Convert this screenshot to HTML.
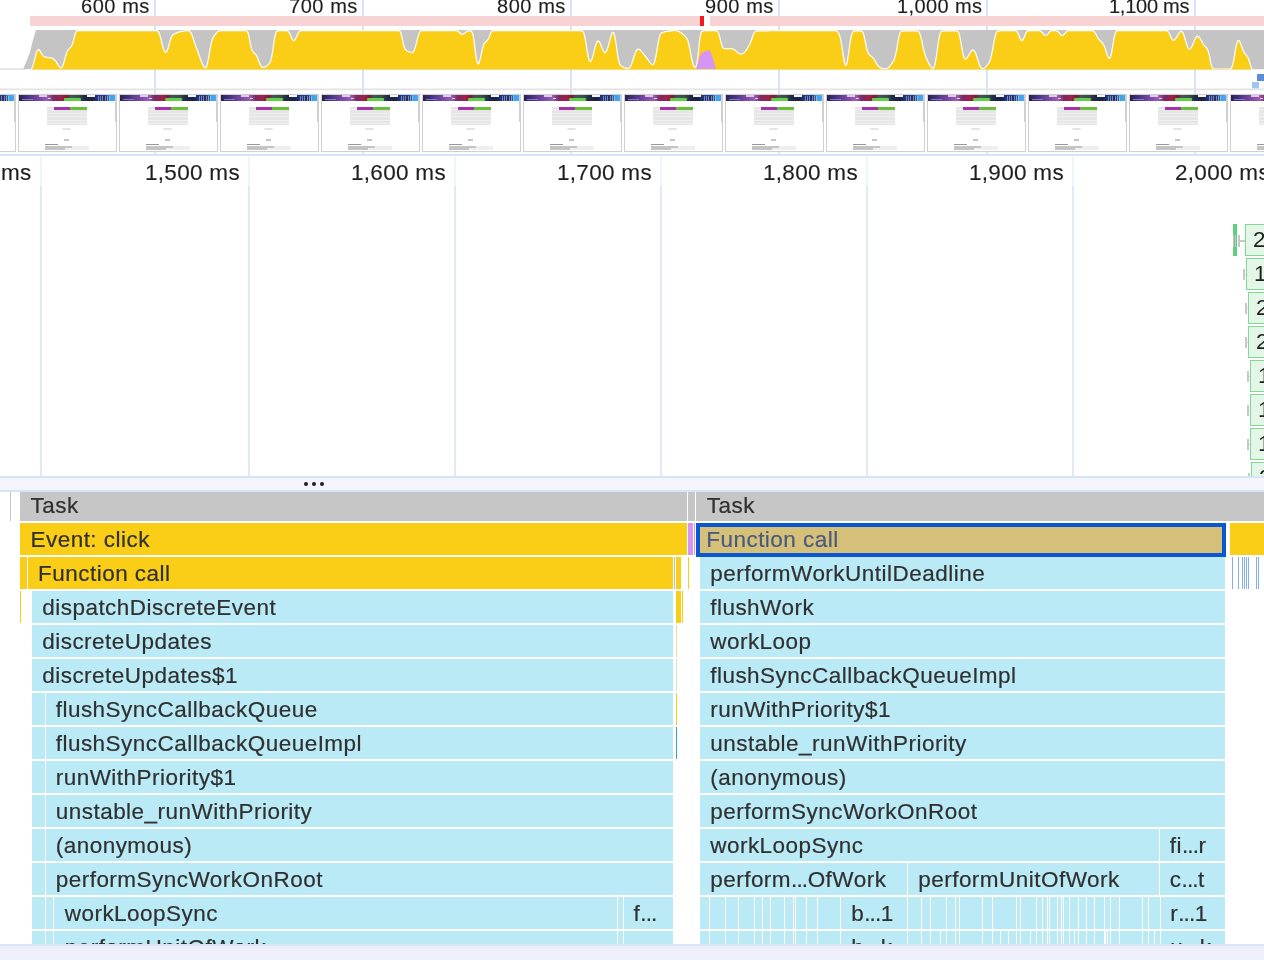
<!DOCTYPE html><html><head><meta charset="utf-8"><style>
html,body{margin:0;padding:0;width:1264px;height:960px;overflow:hidden;background:#fff;}
body{position:relative;-webkit-font-smoothing:antialiased;font-family:"Liberation Sans",sans-serif;}
div{position:absolute;box-sizing:border-box;}
.rl{will-change:transform;-webkit-text-stroke-width:0.15px;font-size:22.5px;color:#1f1f1f;white-space:nowrap;text-align:right;}
.fr{will-change:transform;-webkit-text-stroke-width:0.2px;overflow:hidden;white-space:nowrap;font-size:22.5px;color:#303030;letter-spacing:0.48px;line-height:33px;}
.fr span{position:absolute;top:0;}
</style></head><body>

<div style="left:154px;top:0px;width:2px;height:155px;background:#d6e4fb;"></div>
<div style="left:362px;top:0px;width:2px;height:155px;background:#d6e4fb;"></div>
<div style="left:570px;top:0px;width:2px;height:155px;background:#d6e4fb;"></div>
<div style="left:778px;top:0px;width:2px;height:155px;background:#d6e4fb;"></div>
<div style="left:986px;top:0px;width:2px;height:155px;background:#d6e4fb;"></div>
<div style="left:1194px;top:0px;width:2px;height:155px;background:#d6e4fb;"></div>
<div class="rl" style="right:1113.8px;top:-6px;line-height:24px;font-size:20px;letter-spacing:0.55px">600 ms</div>
<div class="rl" style="right:905.8px;top:-6px;line-height:24px;font-size:20px;letter-spacing:0.55px">700 ms</div>
<div class="rl" style="right:697.8px;top:-6px;line-height:24px;font-size:20px;letter-spacing:0.55px">800 ms</div>
<div class="rl" style="right:489.79999999999995px;top:-6px;line-height:24px;font-size:20px;letter-spacing:0.55px">900 ms</div>
<div class="rl" style="right:281.94999999999993px;top:-6px;line-height:24px;font-size:20px;letter-spacing:0.4px">1,000 ms</div>
<div class="rl" style="right:74.59999999999995px;top:-6px;line-height:24px;font-size:20px;letter-spacing:-0.25px">1,100 ms</div>
<div style="left:30px;top:16px;width:670px;height:10px;background:#f8d3d3;"></div>
<div style="left:700px;top:16px;width:4px;height:10px;background:#f41a1a;"></div>
<div style="left:710px;top:16px;width:554px;height:10px;background:#f8d3d3;"></div>
<svg style="position:absolute;left:0;top:0" width="1264" height="92" viewBox="0 0 1264 92">
<defs><clipPath id="cc"><rect x="0" y="0" width="1264" height="69.6"/></clipPath></defs><line x1="0" y1="69" x2="26" y2="69" stroke="#d0d0d0" stroke-width="1"/><g clip-path="url(#cc)">
<path d="M23,69.6 L27,60 L30,52 L33,40 L36,30 L1264,30 L1264,69.6 Z" fill="#c4c4c4"/>
<path d="M24.0,70.00 L24.5,70.00 L25.0,70.00 L25.5,70.00 L26.0,70.00 L26.5,70.00 L27.0,70.00 L27.5,70.00 L28.0,70.00 L28.5,70.00 L29.0,69.99 L29.5,69.96 L30.0,69.89 L30.5,69.72 L31.0,69.39 L31.5,68.83 L32.0,67.97 L32.5,66.81 L33.0,65.35 L33.5,63.64 L34.0,61.75 L34.5,59.75 L35.0,57.74 L35.5,55.80 L36.0,54.01 L36.5,52.45 L37.0,51.19 L37.5,50.29 L38.0,49.76 L38.5,49.59 L39.0,49.76 L39.5,50.21 L40.0,50.86 L40.5,51.65 L41.0,52.52 L41.5,53.40 L42.0,54.24 L42.5,54.99 L43.0,55.62 L43.5,56.11 L44.0,56.48 L44.5,56.74 L45.0,56.94 L45.5,57.08 L46.0,57.20 L46.5,57.29 L47.0,57.38 L47.5,57.45 L48.0,57.52 L48.5,57.59 L49.0,57.65 L49.5,57.72 L50.0,57.79 L50.5,57.88 L51.0,57.97 L51.5,58.08 L52.0,58.21 L52.5,58.38 L53.0,58.60 L53.5,58.89 L54.0,59.26 L54.5,59.74 L55.0,60.31 L55.5,60.97 L56.0,61.69 L56.5,62.47 L57.0,63.27 L57.5,64.08 L58.0,64.87 L58.5,65.62 L59.0,66.31 L59.5,66.91 L60.0,67.39 L60.5,67.71 L61.0,67.83 L61.5,67.68 L62.0,67.22 L62.5,66.42 L63.0,65.29 L63.5,63.85 L64.0,62.18 L64.5,60.36 L65.0,58.48 L65.5,56.63 L66.0,54.89 L66.5,53.33 L67.0,52.01 L67.5,50.92 L68.0,50.06 L68.5,49.37 L69.0,48.81 L69.5,48.33 L70.0,47.87 L70.5,47.38 L71.0,46.80 L71.5,46.07 L72.0,45.09 L72.5,43.82 L73.0,42.23 L73.5,40.36 L74.0,38.34 L74.5,36.34 L75.0,34.52 L75.5,33.05 L76.0,31.97 L76.5,31.28 L77.0,30.89 L77.5,30.71 L78.0,30.63 L78.5,30.61 L79.0,30.60 L79.5,30.60 L80.0,30.60 L80.5,30.60 L81.0,30.60 L81.5,30.60 L82.0,30.60 L82.5,30.60 L83.0,30.60 L83.5,30.60 L84.0,30.60 L84.5,30.60 L85.0,30.60 L85.5,30.60 L86.0,30.60 L86.5,30.60 L87.0,30.60 L87.5,30.60 L88.0,30.60 L88.5,30.60 L89.0,30.60 L89.5,30.60 L90.0,30.60 L90.5,30.60 L91.0,30.60 L91.5,30.60 L92.0,30.60 L92.5,30.60 L93.0,30.60 L93.5,30.60 L94.0,30.60 L94.5,30.60 L95.0,30.60 L95.5,30.60 L96.0,30.60 L96.5,30.60 L97.0,30.60 L97.5,30.60 L98.0,30.60 L98.5,30.60 L99.0,30.60 L99.5,30.60 L100.0,30.60 L100.5,30.60 L101.0,30.60 L101.5,30.60 L102.0,30.60 L102.5,30.60 L103.0,30.60 L103.5,30.60 L104.0,30.60 L104.5,30.60 L105.0,30.60 L105.5,30.60 L106.0,30.60 L106.5,30.60 L107.0,30.60 L107.5,30.60 L108.0,30.60 L108.5,30.60 L109.0,30.60 L109.5,30.60 L110.0,30.60 L110.5,30.60 L111.0,30.60 L111.5,30.60 L112.0,30.60 L112.5,30.60 L113.0,30.60 L113.5,30.60 L114.0,30.60 L114.5,30.60 L115.0,30.60 L115.5,30.60 L116.0,30.60 L116.5,30.60 L117.0,30.60 L117.5,30.60 L118.0,30.60 L118.5,30.60 L119.0,30.60 L119.5,30.60 L120.0,30.60 L120.5,30.60 L121.0,30.60 L121.5,30.60 L122.0,30.60 L122.5,30.60 L123.0,30.60 L123.5,30.60 L124.0,30.60 L124.5,30.60 L125.0,30.60 L125.5,30.60 L126.0,30.60 L126.5,30.60 L127.0,30.60 L127.5,30.60 L128.0,30.60 L128.5,30.60 L129.0,30.60 L129.5,30.60 L130.0,30.60 L130.5,30.60 L131.0,30.60 L131.5,30.60 L132.0,30.60 L132.5,30.60 L133.0,30.60 L133.5,30.60 L134.0,30.60 L134.5,30.60 L135.0,30.60 L135.5,30.60 L136.0,30.60 L136.5,30.60 L137.0,30.60 L137.5,30.60 L138.0,30.60 L138.5,30.60 L139.0,30.60 L139.5,30.60 L140.0,30.60 L140.5,30.60 L141.0,30.60 L141.5,30.60 L142.0,30.60 L142.5,30.60 L143.0,30.60 L143.5,30.60 L144.0,30.60 L144.5,30.60 L145.0,30.60 L145.5,30.60 L146.0,30.60 L146.5,30.60 L147.0,30.60 L147.5,30.60 L148.0,30.60 L148.5,30.60 L149.0,30.60 L149.5,30.60 L150.0,30.60 L150.5,30.60 L151.0,30.60 L151.5,30.60 L152.0,30.60 L152.5,30.60 L153.0,30.60 L153.5,30.60 L154.0,30.60 L154.5,30.60 L155.0,30.60 L155.5,30.60 L156.0,30.62 L156.5,30.67 L157.0,30.78 L157.5,31.01 L158.0,31.43 L158.5,32.10 L159.0,33.06 L159.5,34.31 L160.0,35.83 L160.5,37.57 L161.0,39.46 L161.5,41.45 L162.0,43.45 L162.5,45.41 L163.0,47.25 L163.5,48.90 L164.0,50.30 L164.5,51.38 L165.0,52.09 L165.5,52.41 L166.0,52.30 L166.5,51.79 L167.0,50.92 L167.5,49.73 L168.0,48.28 L168.5,46.66 L169.0,44.92 L169.5,43.15 L170.0,41.41 L170.5,39.77 L171.0,38.29 L171.5,37.04 L172.0,36.02 L172.5,35.25 L173.0,34.68 L173.5,34.27 L174.0,33.96 L174.5,33.71 L175.0,33.49 L175.5,33.28 L176.0,33.09 L176.5,32.90 L177.0,32.72 L177.5,32.55 L178.0,32.38 L178.5,32.23 L179.0,32.08 L179.5,31.94 L180.0,31.80 L180.5,31.68 L181.0,31.56 L181.5,31.45 L182.0,31.34 L182.5,31.24 L183.0,31.15 L183.5,31.07 L184.0,31.00 L184.5,30.93 L185.0,30.86 L185.5,30.81 L186.0,30.76 L186.5,30.72 L187.0,30.69 L187.5,30.67 L188.0,30.67 L188.5,30.73 L189.0,30.86 L189.5,31.12 L190.0,31.55 L190.5,32.18 L191.0,33.03 L191.5,34.08 L192.0,35.29 L192.5,36.64 L193.0,38.07 L193.5,39.55 L194.0,41.03 L194.5,42.48 L195.0,43.89 L195.5,45.25 L196.0,46.59 L196.5,47.93 L197.0,49.28 L197.5,50.66 L198.0,52.07 L198.5,53.50 L199.0,54.95 L199.5,56.39 L200.0,57.82 L200.5,59.21 L201.0,60.55 L201.5,61.83 L202.0,63.03 L202.5,64.14 L203.0,65.14 L203.5,66.01 L204.0,66.73 L204.5,67.27 L205.0,67.58 L205.5,67.59 L206.0,67.22 L206.5,66.38 L207.0,65.03 L207.5,63.19 L208.0,60.90 L208.5,58.26 L209.0,55.41 L209.5,52.47 L210.0,49.58 L210.5,46.86 L211.0,44.42 L211.5,42.33 L212.0,40.60 L212.5,39.20 L213.0,38.05 L213.5,37.07 L214.0,36.21 L214.5,35.42 L215.0,34.69 L215.5,34.01 L216.0,33.38 L216.5,32.81 L217.0,32.30 L217.5,31.86 L218.0,31.49 L218.5,31.19 L219.0,30.97 L219.5,30.81 L220.0,30.71 L220.5,30.65 L221.0,30.62 L221.5,30.61 L222.0,30.60 L222.5,30.60 L223.0,30.60 L223.5,30.60 L224.0,30.60 L224.5,30.60 L225.0,30.60 L225.5,30.60 L226.0,30.60 L226.5,30.60 L227.0,30.60 L227.5,30.60 L228.0,30.60 L228.5,30.60 L229.0,30.60 L229.5,30.60 L230.0,30.60 L230.5,30.60 L231.0,30.60 L231.5,30.60 L232.0,30.60 L232.5,30.60 L233.0,30.60 L233.5,30.60 L234.0,30.60 L234.5,30.60 L235.0,30.60 L235.5,30.60 L236.0,30.60 L236.5,30.60 L237.0,30.60 L237.5,30.60 L238.0,30.60 L238.5,30.60 L239.0,30.60 L239.5,30.60 L240.0,30.60 L240.5,30.60 L241.0,30.60 L241.5,30.60 L242.0,30.60 L242.5,30.60 L243.0,30.60 L243.5,30.60 L244.0,30.60 L244.5,30.60 L245.0,30.60 L245.5,30.61 L246.0,30.66 L246.5,30.79 L247.0,31.10 L247.5,31.71 L248.0,32.78 L248.5,34.39 L249.0,36.53 L249.5,39.07 L250.0,41.78 L250.5,44.40 L251.0,46.71 L251.5,48.59 L252.0,50.00 L252.5,51.03 L253.0,51.77 L253.5,52.33 L254.0,52.80 L254.5,53.24 L255.0,53.70 L255.5,54.23 L256.0,54.86 L256.5,55.63 L257.0,56.56 L257.5,57.66 L258.0,58.90 L258.5,60.23 L259.0,61.61 L259.5,62.95 L260.0,64.20 L260.5,65.28 L261.0,66.15 L261.5,66.78 L262.0,67.18 L262.5,67.39 L263.0,67.45 L263.5,67.40 L264.0,67.28 L264.5,67.11 L265.0,66.90 L265.5,66.65 L266.0,66.36 L266.5,66.04 L267.0,65.68 L267.5,65.29 L268.0,64.86 L268.5,64.39 L269.0,63.86 L269.5,63.22 L270.0,62.38 L270.5,61.25 L271.0,59.70 L271.5,57.63 L272.0,55.05 L272.5,52.00 L273.0,48.64 L273.5,45.17 L274.0,41.78 L274.5,38.70 L275.0,36.09 L275.5,34.06 L276.0,32.63 L276.5,31.72 L277.0,31.21 L277.5,30.96 L278.0,30.85 L278.5,30.80 L279.0,30.77 L279.5,30.75 L280.0,30.73 L280.5,30.71 L281.0,30.70 L281.5,30.68 L282.0,30.67 L282.5,30.66 L283.0,30.65 L283.5,30.64 L284.0,30.63 L284.5,30.62 L285.0,30.62 L285.5,30.61 L286.0,30.62 L286.5,30.64 L287.0,30.69 L287.5,30.83 L288.0,31.09 L288.5,31.54 L289.0,32.20 L289.5,33.08 L290.0,34.15 L290.5,35.35 L291.0,36.60 L291.5,37.81 L292.0,38.90 L292.5,39.78 L293.0,40.39 L293.5,40.69 L294.0,40.65 L294.5,40.30 L295.0,39.67 L295.5,38.81 L296.0,37.79 L296.5,36.68 L297.0,35.52 L297.5,34.40 L298.0,33.38 L298.5,32.49 L299.0,31.79 L299.5,31.28 L300.0,30.95 L300.5,30.76 L301.0,30.66 L301.5,30.62 L302.0,30.60 L302.5,30.60 L303.0,30.60 L303.5,30.60 L304.0,30.60 L304.5,30.60 L305.0,30.60 L305.5,30.60 L306.0,30.60 L306.5,30.60 L307.0,30.60 L307.5,30.60 L308.0,30.60 L308.5,30.60 L309.0,30.60 L309.5,30.60 L310.0,30.60 L310.5,30.60 L311.0,30.60 L311.5,30.60 L312.0,30.60 L312.5,30.60 L313.0,30.60 L313.5,30.60 L314.0,30.60 L314.5,30.60 L315.0,30.60 L315.5,30.60 L316.0,30.60 L316.5,30.60 L317.0,30.60 L317.5,30.60 L318.0,30.60 L318.5,30.60 L319.0,30.60 L319.5,30.60 L320.0,30.60 L320.5,30.60 L321.0,30.60 L321.5,30.60 L322.0,30.60 L322.5,30.60 L323.0,30.60 L323.5,30.60 L324.0,30.60 L324.5,30.60 L325.0,30.60 L325.5,30.60 L326.0,30.60 L326.5,30.60 L327.0,30.60 L327.5,30.60 L328.0,30.60 L328.5,30.60 L329.0,30.60 L329.5,30.60 L330.0,30.60 L330.5,30.60 L331.0,30.60 L331.5,30.60 L332.0,30.60 L332.5,30.60 L333.0,30.60 L333.5,30.60 L334.0,30.60 L334.5,30.60 L335.0,30.60 L335.5,30.60 L336.0,30.60 L336.5,30.60 L337.0,30.60 L337.5,30.60 L338.0,30.60 L338.5,30.60 L339.0,30.60 L339.5,30.60 L340.0,30.60 L340.5,30.60 L341.0,30.60 L341.5,30.60 L342.0,30.60 L342.5,30.60 L343.0,30.60 L343.5,30.60 L344.0,30.60 L344.5,30.60 L345.0,30.60 L345.5,30.60 L346.0,30.60 L346.5,30.60 L347.0,30.60 L347.5,30.60 L348.0,30.60 L348.5,30.60 L349.0,30.60 L349.5,30.60 L350.0,30.60 L350.5,30.60 L351.0,30.60 L351.5,30.60 L352.0,30.60 L352.5,30.60 L353.0,30.60 L353.5,30.60 L354.0,30.60 L354.5,30.60 L355.0,30.60 L355.5,30.60 L356.0,30.60 L356.5,30.60 L357.0,30.60 L357.5,30.60 L358.0,30.60 L358.5,30.60 L359.0,30.60 L359.5,30.60 L360.0,30.60 L360.5,30.60 L361.0,30.60 L361.5,30.60 L362.0,30.60 L362.5,30.60 L363.0,30.60 L363.5,30.60 L364.0,30.60 L364.5,30.60 L365.0,30.60 L365.5,30.60 L366.0,30.60 L366.5,30.60 L367.0,30.60 L367.5,30.60 L368.0,30.60 L368.5,30.60 L369.0,30.60 L369.5,30.60 L370.0,30.60 L370.5,30.60 L371.0,30.60 L371.5,30.60 L372.0,30.60 L372.5,30.60 L373.0,30.60 L373.5,30.60 L374.0,30.60 L374.5,30.60 L375.0,30.60 L375.5,30.60 L376.0,30.60 L376.5,30.60 L377.0,30.60 L377.5,30.60 L378.0,30.60 L378.5,30.60 L379.0,30.60 L379.5,30.60 L380.0,30.60 L380.5,30.60 L381.0,30.60 L381.5,30.60 L382.0,30.60 L382.5,30.60 L383.0,30.60 L383.5,30.60 L384.0,30.60 L384.5,30.60 L385.0,30.60 L385.5,30.60 L386.0,30.60 L386.5,30.60 L387.0,30.60 L387.5,30.60 L388.0,30.60 L388.5,30.60 L389.0,30.60 L389.5,30.60 L390.0,30.60 L390.5,30.60 L391.0,30.60 L391.5,30.60 L392.0,30.60 L392.5,30.60 L393.0,30.60 L393.5,30.60 L394.0,30.60 L394.5,30.60 L395.0,30.60 L395.5,30.60 L396.0,30.60 L396.5,30.60 L397.0,30.60 L397.5,30.60 L398.0,30.61 L398.5,30.63 L399.0,30.71 L399.5,30.93 L400.0,31.38 L400.5,32.21 L401.0,33.53 L401.5,35.36 L402.0,37.61 L402.5,40.08 L403.0,42.54 L403.5,44.74 L404.0,46.53 L404.5,47.88 L405.0,48.84 L405.5,49.52 L406.0,50.01 L406.5,50.41 L407.0,50.75 L407.5,51.06 L408.0,51.33 L408.5,51.58 L409.0,51.81 L409.5,52.00 L410.0,52.17 L410.5,52.31 L411.0,52.42 L411.5,52.49 L412.0,52.48 L412.5,52.36 L413.0,52.07 L413.5,51.53 L414.0,50.70 L414.5,49.56 L415.0,48.13 L415.5,46.45 L416.0,44.60 L416.5,42.64 L417.0,40.66 L417.5,38.71 L418.0,36.87 L418.5,35.18 L419.0,33.72 L419.5,32.55 L420.0,31.69 L420.5,31.14 L421.0,30.83 L421.5,30.68 L422.0,30.62 L422.5,30.60 L423.0,30.60 L423.5,30.60 L424.0,30.60 L424.5,30.60 L425.0,30.60 L425.5,30.60 L426.0,30.60 L426.5,30.60 L427.0,30.60 L427.5,30.60 L428.0,30.60 L428.5,30.60 L429.0,30.60 L429.5,30.60 L430.0,30.60 L430.5,30.60 L431.0,30.60 L431.5,30.60 L432.0,30.60 L432.5,30.60 L433.0,30.60 L433.5,30.60 L434.0,30.60 L434.5,30.60 L435.0,30.60 L435.5,30.60 L436.0,30.60 L436.5,30.60 L437.0,30.60 L437.5,30.60 L438.0,30.60 L438.5,30.60 L439.0,30.60 L439.5,30.60 L440.0,30.60 L440.5,30.60 L441.0,30.60 L441.5,30.60 L442.0,30.60 L442.5,30.60 L443.0,30.60 L443.5,30.60 L444.0,30.60 L444.5,30.60 L445.0,30.60 L445.5,30.60 L446.0,30.60 L446.5,30.60 L447.0,30.60 L447.5,30.60 L448.0,30.60 L448.5,30.60 L449.0,30.60 L449.5,30.60 L450.0,30.60 L450.5,30.60 L451.0,30.60 L451.5,30.60 L452.0,30.60 L452.5,30.60 L453.0,30.60 L453.5,30.60 L454.0,30.60 L454.5,30.60 L455.0,30.60 L455.5,30.61 L456.0,30.63 L456.5,30.68 L457.0,30.78 L457.5,30.95 L458.0,31.22 L458.5,31.58 L459.0,32.02 L459.5,32.50 L460.0,32.99 L460.5,33.43 L461.0,33.79 L461.5,34.04 L462.0,34.16 L462.5,34.16 L463.0,34.04 L463.5,33.84 L464.0,33.57 L464.5,33.24 L465.0,32.88 L465.5,32.51 L466.0,32.14 L466.5,31.79 L467.0,31.47 L467.5,31.20 L468.0,30.98 L468.5,30.83 L469.0,30.73 L469.5,30.69 L470.0,30.70 L470.5,30.77 L471.0,30.94 L471.5,31.32 L472.0,32.04 L472.5,33.27 L473.0,35.14 L473.5,37.72 L474.0,40.94 L474.5,44.64 L475.0,48.60 L475.5,52.55 L476.0,56.22 L476.5,59.35 L477.0,61.74 L477.5,63.28 L478.0,63.94 L478.5,63.78 L479.0,62.92 L479.5,61.51 L480.0,59.68 L480.5,57.57 L481.0,55.31 L481.5,53.00 L482.0,50.76 L482.5,48.69 L483.0,46.88 L483.5,45.37 L484.0,44.17 L484.5,43.27 L485.0,42.59 L485.5,42.06 L486.0,41.62 L486.5,41.20 L487.0,40.72 L487.5,40.14 L488.0,39.41 L488.5,38.48 L489.0,37.38 L489.5,36.14 L490.0,34.87 L490.5,33.66 L491.0,32.61 L491.5,31.80 L492.0,31.24 L492.5,30.90 L493.0,30.72 L493.5,30.64 L494.0,30.61 L494.5,30.60 L495.0,30.60 L495.5,30.60 L496.0,30.60 L496.5,30.60 L497.0,30.60 L497.5,30.60 L498.0,30.60 L498.5,30.60 L499.0,30.60 L499.5,30.60 L500.0,30.60 L500.5,30.60 L501.0,30.60 L501.5,30.60 L502.0,30.60 L502.5,30.60 L503.0,30.60 L503.5,30.60 L504.0,30.60 L504.5,30.60 L505.0,30.60 L505.5,30.60 L506.0,30.60 L506.5,30.60 L507.0,30.60 L507.5,30.60 L508.0,30.60 L508.5,30.60 L509.0,30.60 L509.5,30.60 L510.0,30.60 L510.5,30.60 L511.0,30.60 L511.5,30.60 L512.0,30.60 L512.5,30.60 L513.0,30.60 L513.5,30.60 L514.0,30.60 L514.5,30.60 L515.0,30.60 L515.5,30.60 L516.0,30.60 L516.5,30.60 L517.0,30.60 L517.5,30.60 L518.0,30.60 L518.5,30.60 L519.0,30.60 L519.5,30.60 L520.0,30.60 L520.5,30.60 L521.0,30.60 L521.5,30.60 L522.0,30.60 L522.5,30.60 L523.0,30.60 L523.5,30.60 L524.0,30.60 L524.5,30.60 L525.0,30.60 L525.5,30.60 L526.0,30.60 L526.5,30.60 L527.0,30.60 L527.5,30.60 L528.0,30.60 L528.5,30.60 L529.0,30.60 L529.5,30.60 L530.0,30.60 L530.5,30.60 L531.0,30.60 L531.5,30.60 L532.0,30.60 L532.5,30.60 L533.0,30.60 L533.5,30.60 L534.0,30.60 L534.5,30.60 L535.0,30.60 L535.5,30.60 L536.0,30.60 L536.5,30.60 L537.0,30.60 L537.5,30.60 L538.0,30.60 L538.5,30.60 L539.0,30.60 L539.5,30.60 L540.0,30.60 L540.5,30.60 L541.0,30.60 L541.5,30.60 L542.0,30.60 L542.5,30.60 L543.0,30.60 L543.5,30.60 L544.0,30.60 L544.5,30.60 L545.0,30.60 L545.5,30.60 L546.0,30.60 L546.5,30.60 L547.0,30.60 L547.5,30.60 L548.0,30.60 L548.5,30.60 L549.0,30.60 L549.5,30.60 L550.0,30.60 L550.5,30.60 L551.0,30.60 L551.5,30.60 L552.0,30.60 L552.5,30.60 L553.0,30.60 L553.5,30.60 L554.0,30.60 L554.5,30.60 L555.0,30.60 L555.5,30.60 L556.0,30.60 L556.5,30.60 L557.0,30.60 L557.5,30.60 L558.0,30.60 L558.5,30.60 L559.0,30.60 L559.5,30.60 L560.0,30.60 L560.5,30.60 L561.0,30.60 L561.5,30.60 L562.0,30.60 L562.5,30.60 L563.0,30.60 L563.5,30.60 L564.0,30.60 L564.5,30.60 L565.0,30.60 L565.5,30.60 L566.0,30.60 L566.5,30.60 L567.0,30.60 L567.5,30.60 L568.0,30.60 L568.5,30.60 L569.0,30.60 L569.5,30.60 L570.0,30.60 L570.5,30.60 L571.0,30.60 L571.5,30.60 L572.0,30.60 L572.5,30.60 L573.0,30.60 L573.5,30.60 L574.0,30.60 L574.5,30.60 L575.0,30.60 L575.5,30.60 L576.0,30.60 L576.5,30.60 L577.0,30.60 L577.5,30.60 L578.0,30.60 L578.5,30.60 L579.0,30.60 L579.5,30.60 L580.0,30.60 L580.5,30.60 L581.0,30.61 L581.5,30.66 L582.0,30.77 L582.5,31.04 L583.0,31.55 L583.5,32.43 L584.0,33.76 L584.5,35.57 L585.0,37.84 L585.5,40.49 L586.0,43.42 L586.5,46.49 L587.0,49.58 L587.5,52.54 L588.0,55.25 L588.5,57.59 L589.0,59.44 L589.5,60.73 L590.0,61.42 L590.5,61.53 L591.0,61.11 L591.5,60.23 L592.0,58.97 L592.5,57.41 L593.0,55.63 L593.5,53.71 L594.0,51.70 L594.5,49.69 L595.0,47.74 L595.5,45.93 L596.0,44.31 L596.5,42.96 L597.0,41.93 L597.5,41.26 L598.0,40.95 L598.5,41.02 L599.0,41.42 L599.5,42.10 L600.0,43.02 L600.5,44.12 L601.0,45.34 L601.5,46.62 L602.0,47.91 L602.5,49.14 L603.0,50.27 L603.5,51.23 L604.0,51.98 L604.5,52.45 L605.0,52.62 L605.5,52.44 L606.0,51.91 L606.5,51.05 L607.0,49.89 L607.5,48.47 L608.0,46.84 L608.5,45.06 L609.0,43.19 L609.5,41.29 L610.0,39.40 L610.5,37.60 L611.0,35.94 L611.5,34.49 L612.0,33.31 L612.5,32.50 L613.0,32.15 L613.5,32.39 L614.0,33.30 L614.5,34.92 L615.0,37.24 L615.5,40.15 L616.0,43.48 L616.5,47.07 L617.0,50.68 L617.5,54.13 L618.0,57.22 L618.5,59.83 L619.0,61.87 L619.5,63.36 L620.0,64.40 L620.5,65.11 L621.0,65.61 L621.5,66.00 L622.0,66.33 L622.5,66.62 L623.0,66.89 L623.5,67.14 L624.0,67.37 L624.5,67.57 L625.0,67.76 L625.5,67.92 L626.0,68.06 L626.5,68.18 L627.0,68.27 L627.5,68.33 L628.0,68.34 L628.5,68.27 L629.0,68.07 L629.5,67.71 L630.0,67.15 L630.5,66.36 L631.0,65.35 L631.5,64.14 L632.0,62.77 L632.5,61.28 L633.0,59.72 L633.5,58.12 L634.0,56.54 L634.5,55.01 L635.0,53.59 L635.5,52.31 L636.0,51.22 L636.5,50.35 L637.0,49.72 L637.5,49.33 L638.0,49.15 L638.5,49.16 L639.0,49.33 L639.5,49.61 L640.0,49.99 L640.5,50.44 L641.0,50.96 L641.5,51.52 L642.0,52.11 L642.5,52.74 L643.0,53.38 L643.5,54.02 L644.0,54.65 L644.5,55.28 L645.0,55.89 L645.5,56.50 L646.0,57.11 L646.5,57.74 L647.0,58.39 L647.5,59.07 L648.0,59.76 L648.5,60.46 L649.0,61.16 L649.5,61.84 L650.0,62.49 L650.5,63.09 L651.0,63.63 L651.5,64.09 L652.0,64.44 L652.5,64.63 L653.0,64.58 L653.5,64.22 L654.0,63.45 L654.5,62.19 L655.0,60.44 L655.5,58.22 L656.0,55.63 L656.5,52.75 L657.0,49.72 L657.5,46.67 L658.0,43.72 L658.5,41.00 L659.0,38.62 L659.5,36.65 L660.0,35.15 L660.5,34.08 L661.0,33.37 L661.5,32.92 L662.0,32.64 L662.5,32.45 L663.0,32.30 L663.5,32.16 L664.0,32.03 L664.5,31.91 L665.0,31.80 L665.5,31.69 L666.0,31.59 L666.5,31.49 L667.0,31.40 L667.5,31.32 L668.0,31.24 L668.5,31.16 L669.0,31.09 L669.5,31.03 L670.0,30.97 L670.5,30.91 L671.0,30.86 L671.5,30.82 L672.0,30.78 L672.5,30.74 L673.0,30.71 L673.5,30.68 L674.0,30.66 L674.5,30.64 L675.0,30.63 L675.5,30.63 L676.0,30.65 L676.5,30.70 L677.0,30.78 L677.5,30.91 L678.0,31.09 L678.5,31.31 L679.0,31.58 L679.5,31.87 L680.0,32.19 L680.5,32.52 L681.0,32.86 L681.5,33.21 L682.0,33.56 L682.5,33.92 L683.0,34.30 L683.5,34.70 L684.0,35.13 L684.5,35.59 L685.0,36.09 L685.5,36.64 L686.0,37.26 L686.5,37.99 L687.0,38.86 L687.5,39.94 L688.0,41.30 L688.5,42.98 L689.0,44.99 L689.5,47.29 L690.0,49.80 L690.5,52.45 L691.0,55.11 L691.5,57.68 L692.0,60.07 L692.5,62.18 L693.0,63.94 L693.5,65.34 L694.0,66.38 L694.5,67.07 L695.0,67.40 L695.5,67.30 L696.0,66.60 L696.5,65.12 L697.0,62.71 L697.5,59.37 L698.0,55.26 L698.5,50.66 L699.0,45.98 L699.5,41.62 L700.0,37.91 L700.5,35.05 L701.0,33.09 L701.5,31.90 L702.0,31.27 L702.5,30.98 L703.0,30.86 L703.5,30.81 L704.0,30.79 L704.5,30.77 L705.0,30.76 L705.5,30.74 L706.0,30.73 L706.5,30.72 L707.0,30.70 L707.5,30.69 L708.0,30.68 L708.5,30.67 L709.0,30.66 L709.5,30.66 L710.0,30.65 L710.5,30.64 L711.0,30.64 L711.5,30.63 L712.0,30.63 L712.5,30.62 L713.0,30.62 L713.5,30.61 L714.0,30.61 L714.5,30.61 L715.0,30.61 L715.5,30.61 L716.0,30.64 L716.5,30.73 L717.0,30.93 L717.5,31.33 L718.0,32.02 L718.5,33.06 L719.0,34.47 L719.5,36.22 L720.0,38.20 L720.5,40.28 L721.0,42.31 L721.5,44.16 L722.0,45.72 L722.5,46.91 L723.0,47.74 L723.5,48.24 L724.0,48.51 L724.5,48.64 L725.0,48.68 L725.5,48.70 L726.0,48.70 L726.5,48.70 L727.0,48.70 L727.5,48.70 L728.0,48.70 L728.5,48.70 L729.0,48.70 L729.5,48.70 L730.0,48.70 L730.5,48.71 L731.0,48.73 L731.5,48.76 L732.0,48.83 L732.5,48.94 L733.0,49.10 L733.5,49.31 L734.0,49.58 L734.5,49.89 L735.0,50.25 L735.5,50.64 L736.0,51.04 L736.5,51.46 L737.0,51.88 L737.5,52.29 L738.0,52.68 L738.5,53.04 L739.0,53.36 L739.5,53.64 L740.0,53.85 L740.5,54.00 L741.0,54.08 L741.5,54.07 L742.0,53.97 L742.5,53.78 L743.0,53.50 L743.5,53.14 L744.0,52.70 L744.5,52.19 L745.0,51.63 L745.5,51.01 L746.0,50.35 L746.5,49.65 L747.0,48.93 L747.5,48.18 L748.0,47.40 L748.5,46.58 L749.0,45.70 L749.5,44.74 L750.0,43.66 L750.5,42.46 L751.0,41.14 L751.5,39.75 L752.0,38.32 L752.5,36.91 L753.0,35.57 L753.5,34.35 L754.0,33.29 L754.5,32.44 L755.0,31.81 L755.5,31.38 L756.0,31.12 L756.5,30.98 L757.0,30.92 L757.5,30.89 L758.0,30.88 L758.5,30.87 L759.0,30.87 L759.5,30.86 L760.0,30.86 L760.5,30.85 L761.0,30.85 L761.5,30.84 L762.0,30.84 L762.5,30.83 L763.0,30.83 L763.5,30.83 L764.0,30.82 L764.5,30.82 L765.0,30.81 L765.5,30.81 L766.0,30.80 L766.5,30.80 L767.0,30.80 L767.5,30.79 L768.0,30.79 L768.5,30.79 L769.0,30.78 L769.5,30.78 L770.0,30.77 L770.5,30.77 L771.0,30.77 L771.5,30.76 L772.0,30.76 L772.5,30.76 L773.0,30.75 L773.5,30.75 L774.0,30.75 L774.5,30.74 L775.0,30.74 L775.5,30.74 L776.0,30.73 L776.5,30.73 L777.0,30.73 L777.5,30.73 L778.0,30.72 L778.5,30.72 L779.0,30.72 L779.5,30.71 L780.0,30.71 L780.5,30.71 L781.0,30.71 L781.5,30.70 L782.0,30.70 L782.5,30.70 L783.0,30.70 L783.5,30.69 L784.0,30.69 L784.5,30.69 L785.0,30.69 L785.5,30.68 L786.0,30.68 L786.5,30.68 L787.0,30.68 L787.5,30.68 L788.0,30.67 L788.5,30.67 L789.0,30.67 L789.5,30.67 L790.0,30.67 L790.5,30.66 L791.0,30.66 L791.5,30.66 L792.0,30.66 L792.5,30.66 L793.0,30.66 L793.5,30.65 L794.0,30.65 L794.5,30.65 L795.0,30.65 L795.5,30.65 L796.0,30.65 L796.5,30.64 L797.0,30.64 L797.5,30.64 L798.0,30.64 L798.5,30.64 L799.0,30.64 L799.5,30.64 L800.0,30.63 L800.5,30.63 L801.0,30.63 L801.5,30.63 L802.0,30.63 L802.5,30.63 L803.0,30.63 L803.5,30.63 L804.0,30.63 L804.5,30.62 L805.0,30.62 L805.5,30.62 L806.0,30.62 L806.5,30.62 L807.0,30.62 L807.5,30.62 L808.0,30.62 L808.5,30.62 L809.0,30.62 L809.5,30.62 L810.0,30.62 L810.5,30.61 L811.0,30.61 L811.5,30.61 L812.0,30.61 L812.5,30.61 L813.0,30.61 L813.5,30.61 L814.0,30.61 L814.5,30.61 L815.0,30.61 L815.5,30.61 L816.0,30.61 L816.5,30.61 L817.0,30.61 L817.5,30.61 L818.0,30.61 L818.5,30.61 L819.0,30.61 L819.5,30.60 L820.0,30.60 L820.5,30.60 L821.0,30.60 L821.5,30.60 L822.0,30.60 L822.5,30.60 L823.0,30.60 L823.5,30.60 L824.0,30.60 L824.5,30.60 L825.0,30.60 L825.5,30.60 L826.0,30.60 L826.5,30.60 L827.0,30.60 L827.5,30.60 L828.0,30.60 L828.5,30.60 L829.0,30.60 L829.5,30.60 L830.0,30.60 L830.5,30.60 L831.0,30.60 L831.5,30.60 L832.0,30.60 L832.5,30.60 L833.0,30.60 L833.5,30.60 L834.0,30.60 L834.5,30.61 L835.0,30.62 L835.5,30.66 L836.0,30.75 L836.5,30.91 L837.0,31.19 L837.5,31.60 L838.0,32.18 L838.5,32.93 L839.0,33.91 L839.5,35.18 L840.0,36.81 L840.5,38.87 L841.0,41.35 L841.5,44.23 L842.0,47.39 L842.5,50.71 L843.0,54.04 L843.5,57.21 L844.0,60.07 L844.5,62.44 L845.0,64.17 L845.5,65.14 L846.0,65.25 L846.5,64.46 L847.0,62.81 L847.5,60.39 L848.0,57.37 L848.5,53.94 L849.0,50.30 L849.5,46.66 L850.0,43.22 L850.5,40.12 L851.0,37.49 L851.5,35.35 L852.0,33.72 L852.5,32.54 L853.0,31.77 L853.5,31.31 L854.0,31.07 L854.5,30.96 L855.0,30.91 L855.5,30.90 L856.0,30.90 L856.5,30.90 L857.0,30.90 L857.5,30.90 L858.0,30.90 L858.5,30.90 L859.0,30.90 L859.5,30.90 L860.0,30.90 L860.5,30.91 L861.0,30.96 L861.5,31.07 L862.0,31.34 L862.5,31.85 L863.0,32.71 L863.5,33.99 L864.0,35.70 L864.5,37.80 L865.0,40.18 L865.5,42.69 L866.0,45.18 L866.5,47.51 L867.0,49.56 L867.5,51.25 L868.0,52.57 L868.5,53.56 L869.0,54.29 L869.5,54.84 L870.0,55.28 L870.5,55.66 L871.0,56.03 L871.5,56.41 L872.0,56.83 L872.5,57.31 L873.0,57.87 L873.5,58.51 L874.0,59.23 L874.5,60.03 L875.0,60.88 L875.5,61.76 L876.0,62.65 L876.5,63.51 L877.0,64.32 L877.5,65.06 L878.0,65.71 L878.5,66.26 L879.0,66.71 L879.5,67.08 L880.0,67.39 L880.5,67.65 L881.0,67.88 L881.5,68.09 L882.0,68.28 L882.5,68.45 L883.0,68.59 L883.5,68.71 L884.0,68.81 L884.5,68.87 L885.0,68.89 L885.5,68.87 L886.0,68.79 L886.5,68.66 L887.0,68.46 L887.5,68.20 L888.0,67.87 L888.5,67.49 L889.0,67.04 L889.5,66.53 L890.0,65.97 L890.5,65.36 L891.0,64.70 L891.5,63.99 L892.0,63.23 L892.5,62.44 L893.0,61.59 L893.5,60.67 L894.0,59.65 L894.5,58.44 L895.0,56.97 L895.5,55.16 L896.0,52.96 L896.5,50.40 L897.0,47.57 L897.5,44.59 L898.0,41.63 L898.5,38.85 L899.0,36.42 L899.5,34.44 L900.0,32.97 L900.5,31.98 L901.0,31.40 L901.5,31.10 L902.0,30.97 L902.5,30.92 L903.0,30.90 L903.5,30.90 L904.0,30.90 L904.5,30.90 L905.0,30.90 L905.5,30.90 L906.0,30.90 L906.5,30.90 L907.0,30.90 L907.5,30.90 L908.0,30.90 L908.5,30.90 L909.0,30.90 L909.5,30.90 L910.0,30.90 L910.5,30.90 L911.0,30.90 L911.5,30.90 L912.0,30.90 L912.5,30.90 L913.0,30.90 L913.5,30.90 L914.0,30.90 L914.5,30.90 L915.0,30.90 L915.5,30.90 L916.0,30.90 L916.5,30.91 L917.0,30.93 L917.5,30.99 L918.0,31.13 L918.5,31.44 L919.0,31.98 L919.5,32.84 L920.0,34.07 L920.5,35.66 L921.0,37.57 L921.5,39.73 L922.0,42.05 L922.5,44.43 L923.0,46.78 L923.5,49.01 L924.0,51.06 L924.5,52.89 L925.0,54.50 L925.5,55.92 L926.0,57.21 L926.5,58.42 L927.0,59.56 L927.5,60.66 L928.0,61.73 L928.5,62.75 L929.0,63.72 L929.5,64.63 L930.0,65.47 L930.5,66.23 L931.0,66.90 L931.5,67.48 L932.0,67.92 L932.5,68.20 L933.0,68.25 L933.5,67.96 L934.0,67.22 L934.5,65.94 L935.0,64.06 L935.5,61.61 L936.0,58.66 L936.5,55.33 L937.0,51.77 L937.5,48.13 L938.0,44.57 L938.5,41.24 L939.0,38.28 L939.5,35.82 L940.0,33.92 L940.5,32.58 L941.0,31.74 L941.5,31.26 L942.0,31.03 L942.5,30.94 L943.0,30.91 L943.5,30.90 L944.0,30.90 L944.5,30.90 L945.0,30.90 L945.5,30.90 L946.0,30.90 L946.5,30.90 L947.0,30.90 L947.5,30.90 L948.0,30.90 L948.5,30.90 L949.0,30.90 L949.5,30.90 L950.0,30.90 L950.5,30.90 L951.0,30.90 L951.5,30.90 L952.0,30.90 L952.5,30.90 L953.0,30.90 L953.5,30.90 L954.0,30.90 L954.5,30.90 L955.0,30.90 L955.5,30.90 L956.0,30.91 L956.5,30.94 L957.0,31.02 L957.5,31.23 L958.0,31.66 L958.5,32.43 L959.0,33.64 L959.5,35.35 L960.0,37.53 L960.5,40.11 L961.0,42.97 L961.5,45.95 L962.0,48.90 L962.5,51.66 L963.0,54.09 L963.5,56.07 L964.0,57.52 L964.5,58.44 L965.0,58.89 L965.5,58.94 L966.0,58.70 L966.5,58.25 L967.0,57.66 L967.5,56.97 L968.0,56.21 L968.5,55.40 L969.0,54.57 L969.5,53.74 L970.0,52.94 L970.5,52.18 L971.0,51.51 L971.5,50.93 L972.0,50.47 L972.5,50.17 L973.0,50.07 L973.5,50.18 L974.0,50.53 L974.5,51.14 L975.0,51.99 L975.5,53.06 L976.0,54.31 L976.5,55.71 L977.0,57.22 L977.5,58.78 L978.0,60.35 L978.5,61.89 L979.0,63.36 L979.5,64.71 L980.0,65.90 L980.5,66.89 L981.0,67.66 L981.5,68.19 L982.0,68.51 L982.5,68.64 L983.0,68.61 L983.5,68.47 L984.0,68.23 L984.5,67.91 L985.0,67.53 L985.5,67.09 L986.0,66.60 L986.5,66.06 L987.0,65.47 L987.5,64.84 L988.0,64.16 L988.5,63.42 L989.0,62.59 L989.5,61.63 L990.0,60.46 L990.5,59.01 L991.0,57.24 L991.5,55.15 L992.0,52.76 L992.5,50.15 L993.0,47.41 L993.5,44.62 L994.0,41.90 L994.5,39.35 L995.0,37.06 L995.5,35.12 L996.0,33.57 L996.5,32.44 L997.0,31.69 L997.5,31.25 L998.0,31.01 L998.5,30.90 L999.0,30.85 L999.5,30.82 L1000.0,30.80 L1000.5,30.79 L1001.0,30.78 L1001.5,30.76 L1002.0,30.75 L1002.5,30.74 L1003.0,30.73 L1003.5,30.72 L1004.0,30.71 L1004.5,30.70 L1005.0,30.69 L1005.5,30.68 L1006.0,30.67 L1006.5,30.67 L1007.0,30.66 L1007.5,30.65 L1008.0,30.65 L1008.5,30.64 L1009.0,30.64 L1009.5,30.63 L1010.0,30.63 L1010.5,30.62 L1011.0,30.62 L1011.5,30.61 L1012.0,30.61 L1012.5,30.61 L1013.0,30.61 L1013.5,30.61 L1014.0,30.61 L1014.5,30.61 L1015.0,30.64 L1015.5,30.72 L1016.0,30.88 L1016.5,31.18 L1017.0,31.68 L1017.5,32.41 L1018.0,33.36 L1018.5,34.48 L1019.0,35.72 L1019.5,36.98 L1020.0,38.17 L1020.5,39.21 L1021.0,39.99 L1021.5,40.46 L1022.0,40.57 L1022.5,40.32 L1023.0,39.71 L1023.5,38.82 L1024.0,37.71 L1024.5,36.48 L1025.0,35.22 L1025.5,34.01 L1026.0,32.95 L1026.5,32.09 L1027.0,31.46 L1027.5,31.04 L1028.0,30.80 L1028.5,30.68 L1029.0,30.62 L1029.5,30.61 L1030.0,30.60 L1030.5,30.60 L1031.0,30.60 L1031.5,30.60 L1032.0,30.60 L1032.5,30.60 L1033.0,30.60 L1033.5,30.60 L1034.0,30.60 L1034.5,30.60 L1035.0,30.60 L1035.5,30.60 L1036.0,30.60 L1036.5,30.60 L1037.0,30.60 L1037.5,30.60 L1038.0,30.60 L1038.5,30.61 L1039.0,30.64 L1039.5,30.70 L1040.0,30.82 L1040.5,31.02 L1041.0,31.33 L1041.5,31.76 L1042.0,32.28 L1042.5,32.87 L1043.0,33.49 L1043.5,34.09 L1044.0,34.64 L1044.5,35.07 L1045.0,35.37 L1045.5,35.50 L1046.0,35.45 L1046.5,35.23 L1047.0,34.86 L1047.5,34.36 L1048.0,33.79 L1048.5,33.18 L1049.0,32.57 L1049.5,32.02 L1050.0,31.55 L1050.5,31.18 L1051.0,30.92 L1051.5,30.76 L1052.0,30.67 L1052.5,30.62 L1053.0,30.61 L1053.5,30.60 L1054.0,30.60 L1054.5,30.60 L1055.0,30.61 L1055.5,30.63 L1056.0,30.68 L1056.5,30.79 L1057.0,30.97 L1057.5,31.26 L1058.0,31.66 L1058.5,32.17 L1059.0,32.74 L1059.5,33.36 L1060.0,33.97 L1060.5,34.53 L1061.0,35.00 L1061.5,35.33 L1062.0,35.49 L1062.5,35.48 L1063.0,35.29 L1063.5,34.94 L1064.0,34.47 L1064.5,33.91 L1065.0,33.30 L1065.5,32.69 L1066.0,32.12 L1066.5,31.63 L1067.0,31.24 L1067.5,30.96 L1068.0,30.78 L1068.5,30.68 L1069.0,30.63 L1069.5,30.61 L1070.0,30.60 L1070.5,30.60 L1071.0,30.60 L1071.5,30.60 L1072.0,30.60 L1072.5,30.60 L1073.0,30.60 L1073.5,30.60 L1074.0,30.60 L1074.5,30.60 L1075.0,30.60 L1075.5,30.60 L1076.0,30.60 L1076.5,30.60 L1077.0,30.60 L1077.5,30.60 L1078.0,30.60 L1078.5,30.60 L1079.0,30.60 L1079.5,30.60 L1080.0,30.60 L1080.5,30.60 L1081.0,30.60 L1081.5,30.60 L1082.0,30.60 L1082.5,30.60 L1083.0,30.60 L1083.5,30.60 L1084.0,30.60 L1084.5,30.60 L1085.0,30.60 L1085.5,30.60 L1086.0,30.60 L1086.5,30.60 L1087.0,30.60 L1087.5,30.60 L1088.0,30.60 L1088.5,30.60 L1089.0,30.60 L1089.5,30.60 L1090.0,30.60 L1090.5,30.60 L1091.0,30.60 L1091.5,30.61 L1092.0,30.65 L1092.5,30.72 L1093.0,30.87 L1093.5,31.12 L1094.0,31.52 L1094.5,32.07 L1095.0,32.76 L1095.5,33.57 L1096.0,34.47 L1096.5,35.41 L1097.0,36.34 L1097.5,37.24 L1098.0,38.07 L1098.5,38.81 L1099.0,39.46 L1099.5,40.04 L1100.0,40.56 L1100.5,41.04 L1101.0,41.51 L1101.5,41.99 L1102.0,42.51 L1102.5,43.10 L1103.0,43.79 L1103.5,44.63 L1104.0,45.62 L1104.5,46.80 L1105.0,48.14 L1105.5,49.61 L1106.0,51.16 L1106.5,52.72 L1107.0,54.23 L1107.5,55.63 L1108.0,56.82 L1108.5,57.74 L1109.0,58.29 L1109.5,58.37 L1110.0,57.90 L1110.5,56.82 L1111.0,55.14 L1111.5,52.92 L1112.0,50.27 L1112.5,47.34 L1113.0,44.28 L1113.5,41.28 L1114.0,38.49 L1114.5,36.06 L1115.0,34.09 L1115.5,32.64 L1116.0,31.66 L1116.5,31.09 L1117.0,30.79 L1117.5,30.66 L1118.0,30.62 L1118.5,30.60 L1119.0,30.60 L1119.5,30.60 L1120.0,30.60 L1120.5,30.60 L1121.0,30.60 L1121.5,30.60 L1122.0,30.60 L1122.5,30.60 L1123.0,30.60 L1123.5,30.60 L1124.0,30.60 L1124.5,30.60 L1125.0,30.60 L1125.5,30.60 L1126.0,30.60 L1126.5,30.60 L1127.0,30.60 L1127.5,30.60 L1128.0,30.60 L1128.5,30.60 L1129.0,30.60 L1129.5,30.60 L1130.0,30.60 L1130.5,30.60 L1131.0,30.60 L1131.5,30.60 L1132.0,30.60 L1132.5,30.60 L1133.0,30.60 L1133.5,30.60 L1134.0,30.60 L1134.5,30.60 L1135.0,30.60 L1135.5,30.60 L1136.0,30.60 L1136.5,30.60 L1137.0,30.60 L1137.5,30.60 L1138.0,30.60 L1138.5,30.60 L1139.0,30.60 L1139.5,30.60 L1140.0,30.60 L1140.5,30.60 L1141.0,30.60 L1141.5,30.60 L1142.0,30.60 L1142.5,30.60 L1143.0,30.60 L1143.5,30.60 L1144.0,30.60 L1144.5,30.60 L1145.0,30.60 L1145.5,30.60 L1146.0,30.60 L1146.5,30.60 L1147.0,30.60 L1147.5,30.60 L1148.0,30.60 L1148.5,30.60 L1149.0,30.60 L1149.5,30.60 L1150.0,30.60 L1150.5,30.60 L1151.0,30.60 L1151.5,30.60 L1152.0,30.60 L1152.5,30.60 L1153.0,30.60 L1153.5,30.60 L1154.0,30.60 L1154.5,30.60 L1155.0,30.60 L1155.5,30.60 L1156.0,30.60 L1156.5,30.60 L1157.0,30.60 L1157.5,30.60 L1158.0,30.60 L1158.5,30.60 L1159.0,30.60 L1159.5,30.60 L1160.0,30.60 L1160.5,30.60 L1161.0,30.60 L1161.5,30.60 L1162.0,30.60 L1162.5,30.60 L1163.0,30.60 L1163.5,30.60 L1164.0,30.60 L1164.5,30.60 L1165.0,30.60 L1165.5,30.61 L1166.0,30.63 L1166.5,30.69 L1167.0,30.83 L1167.5,31.09 L1168.0,31.51 L1168.5,32.13 L1169.0,32.94 L1169.5,33.91 L1170.0,35.00 L1170.5,36.14 L1171.0,37.26 L1171.5,38.28 L1172.0,39.15 L1172.5,39.81 L1173.0,40.22 L1173.5,40.38 L1174.0,40.30 L1174.5,40.01 L1175.0,39.55 L1175.5,38.94 L1176.0,38.23 L1176.5,37.43 L1177.0,36.58 L1177.5,35.71 L1178.0,34.84 L1178.5,34.00 L1179.0,33.22 L1179.5,32.53 L1180.0,31.95 L1180.5,31.52 L1181.0,31.29 L1181.5,31.29 L1182.0,31.56 L1182.5,32.13 L1183.0,33.00 L1183.5,34.14 L1184.0,35.51 L1184.5,37.07 L1185.0,38.74 L1185.5,40.47 L1186.0,42.20 L1186.5,43.86 L1187.0,45.38 L1187.5,46.71 L1188.0,47.79 L1188.5,48.58 L1189.0,49.06 L1189.5,49.22 L1190.0,49.07 L1190.5,48.66 L1191.0,48.01 L1191.5,47.17 L1192.0,46.19 L1192.5,45.09 L1193.0,43.93 L1193.5,42.73 L1194.0,41.53 L1194.5,40.38 L1195.0,39.30 L1195.5,38.34 L1196.0,37.53 L1196.5,36.91 L1197.0,36.48 L1197.5,36.28 L1198.0,36.30 L1198.5,36.53 L1199.0,36.96 L1199.5,37.54 L1200.0,38.26 L1200.5,39.09 L1201.0,39.99 L1201.5,40.93 L1202.0,41.88 L1202.5,42.82 L1203.0,43.72 L1203.5,44.54 L1204.0,45.27 L1204.5,45.90 L1205.0,46.44 L1205.5,46.91 L1206.0,47.36 L1206.5,47.86 L1207.0,48.48 L1207.5,49.35 L1208.0,50.56 L1208.5,52.16 L1209.0,54.16 L1209.5,56.47 L1210.0,58.94 L1210.5,61.39 L1211.0,63.63 L1211.5,65.51 L1212.0,66.94 L1212.5,67.91 L1213.0,68.49 L1213.5,68.80 L1214.0,68.93 L1214.5,68.98 L1215.0,69.00 L1215.5,69.00 L1216.0,69.00 L1216.5,69.00 L1217.0,69.00 L1217.5,69.00 L1218.0,69.00 L1218.5,69.00 L1219.0,69.00 L1219.5,69.00 L1220.0,69.00 L1220.5,69.00 L1221.0,69.00 L1221.5,69.00 L1222.0,69.00 L1222.5,69.00 L1223.0,69.00 L1223.5,69.00 L1224.0,69.00 L1224.5,69.00 L1225.0,69.00 L1225.5,69.00 L1226.0,69.00 L1226.5,69.00 L1227.0,69.00 L1227.5,69.00 L1228.0,69.00 L1228.5,69.00 L1229.0,69.00 L1229.5,68.98 L1230.0,68.92 L1230.5,68.78 L1231.0,68.46 L1231.5,67.85 L1232.0,66.85 L1232.5,65.37 L1233.0,63.41 L1233.5,61.00 L1234.0,58.26 L1234.5,55.31 L1235.0,52.29 L1235.5,49.37 L1236.0,46.69 L1236.5,44.38 L1237.0,42.57 L1237.5,41.30 L1238.0,40.60 L1238.5,40.44 L1239.0,40.73 L1239.5,41.38 L1240.0,42.31 L1240.5,43.45 L1241.0,44.72 L1241.5,46.08 L1242.0,47.45 L1242.5,48.80 L1243.0,50.07 L1243.5,51.23 L1244.0,52.23 L1244.5,53.08 L1245.0,53.79 L1245.5,54.39 L1246.0,54.93 L1246.5,55.46 L1247.0,56.06 L1247.5,56.77 L1248.0,57.68 L1248.5,58.83 L1249.0,60.21 L1249.5,61.80 L1250.0,63.51 L1250.5,65.19 L1251.0,66.70 L1251.5,67.89 L1252,71 L24,71 Z" fill="#facd16" stroke="#fff" stroke-width="1.2"/>
<path d="M696.2,69 C699,60 700,54 702,52.7 C705,51.5 708,50.5 709.7,50.3 C712,55 714,62 716,69 Z" fill="#d595f5"/></g>

<rect x="1257" y="74" width="7" height="7" fill="#5b8dd6"/>
<rect x="1252" y="82" width="7" height="6.5" fill="#a2c4f4"/>
<rect x="0" y="88.5" width="1264" height="1.8" fill="#e3e3e3"/>
</svg>
<div style="left:-83.4px;top:94px;width:99px;height:58px;border:1.2px solid #d0d0d0;background:#fff;overflow:hidden"><div style="left:0;top:0;width:96.3px;height:6px;background:linear-gradient(90deg,#2a2050 0%,#44307a 8%,#6a4098 16%,#8450a8 24%,#9a60b0 30%,#7a2a68 36%,#a02048 44%,#7a1a40 50%,#405858 54%,#3a5048 62%,#202a48 68%,#1a2040 76%,#2040a0 84%,#2a3a80 90%,#3aa0f0 94%,#48a8f0 100%)"></div><div style="left:3px;top:3.5px;width:11px;height:1.6px;background:#8a90e0;opacity:.8"></div><div style="left:20px;top:0.3px;width:8px;height:1.6px;background:#f0d0ff;opacity:.9"></div><div style="left:29px;top:3px;width:3px;height:1px;background:#f0f0f0;opacity:.8"></div><div style="left:79px;top:0.5px;width:12px;height:5px;background:repeating-linear-gradient(90deg,#e0e0f0 0 1px,#202040 1px 2.2px);opacity:.45"></div><div style="left:45.8px;top:2.6px;width:16.6px;height:3.4px;background:#62d048;border-radius:1px"></div><div style="left:68.5px;top:0;width:7.5px;height:1.6px;background:#f4f4f4"></div><div style="left:96.3px;top:0;width:1.3px;height:26.7px;background:#d0d0d0"></div><div style="left:28.2px;top:11.9px;width:40.5px;height:17.7px;background:repeating-linear-gradient(180deg,#e6e6e6 0 2.4px,#f0f0f0 2.4px 3.5px)"></div><div style="left:35.8px;top:11.9px;width:16px;height:2.9px;background:#a632a8"></div><div style="left:51.8px;top:11.9px;width:16.9px;height:2.9px;background:#6abf3a"></div><div style="left:43px;top:32.5px;width:9.2px;height:2.6px;border:0.8px solid #e4e4e4;border-radius:1.5px"></div><div style="left:45px;top:44px;width:5.8px;height:2.4px;background:#b8b8b8;opacity:.8"></div><div style="left:26px;top:48.6px;width:13.5px;height:1.4px;background:#808080;opacity:.8"></div><div style="left:26px;top:50.5px;width:44.9px;height:4.5px;background:#efefef"></div><div style="left:26px;top:50.5px;width:27.6px;height:2px;background:#c4c4c4"></div><div style="left:26px;top:53px;width:20.6px;height:2px;background:#c4c4c4"></div></div>
<div style="left:17.6px;top:94px;width:99px;height:58px;border:1.2px solid #d0d0d0;background:#fff;overflow:hidden"><div style="left:0;top:0;width:96.3px;height:6px;background:linear-gradient(90deg,#2a2050 0%,#44307a 8%,#6a4098 16%,#8450a8 24%,#9a60b0 30%,#7a2a68 36%,#a02048 44%,#7a1a40 50%,#405858 54%,#3a5048 62%,#202a48 68%,#1a2040 76%,#2040a0 84%,#2a3a80 90%,#3aa0f0 94%,#48a8f0 100%)"></div><div style="left:3px;top:3.5px;width:11px;height:1.6px;background:#8a90e0;opacity:.8"></div><div style="left:20px;top:0.3px;width:8px;height:1.6px;background:#f0d0ff;opacity:.9"></div><div style="left:29px;top:3px;width:3px;height:1px;background:#f0f0f0;opacity:.8"></div><div style="left:79px;top:0.5px;width:12px;height:5px;background:repeating-linear-gradient(90deg,#e0e0f0 0 1px,#202040 1px 2.2px);opacity:.45"></div><div style="left:45.8px;top:2.6px;width:16.6px;height:3.4px;background:#62d048;border-radius:1px"></div><div style="left:68.5px;top:0;width:7.5px;height:1.6px;background:#f4f4f4"></div><div style="left:96.3px;top:0;width:1.3px;height:26.7px;background:#d0d0d0"></div><div style="left:28.2px;top:11.9px;width:40.5px;height:17.7px;background:repeating-linear-gradient(180deg,#e6e6e6 0 2.4px,#f0f0f0 2.4px 3.5px)"></div><div style="left:35.8px;top:11.9px;width:16px;height:2.9px;background:#a632a8"></div><div style="left:51.8px;top:11.9px;width:16.9px;height:2.9px;background:#6abf3a"></div><div style="left:43px;top:32.5px;width:9.2px;height:2.6px;border:0.8px solid #e4e4e4;border-radius:1.5px"></div><div style="left:45px;top:44px;width:5.8px;height:2.4px;background:#b8b8b8;opacity:.8"></div><div style="left:26px;top:48.6px;width:13.5px;height:1.4px;background:#808080;opacity:.8"></div><div style="left:26px;top:50.5px;width:44.9px;height:4.5px;background:#efefef"></div><div style="left:26px;top:50.5px;width:27.6px;height:2px;background:#c4c4c4"></div><div style="left:26px;top:53px;width:20.6px;height:2px;background:#c4c4c4"></div></div>
<div style="left:118.6px;top:94px;width:99px;height:58px;border:1.2px solid #d0d0d0;background:#fff;overflow:hidden"><div style="left:0;top:0;width:96.3px;height:6px;background:linear-gradient(90deg,#2a2050 0%,#44307a 8%,#6a4098 16%,#8450a8 24%,#9a60b0 30%,#7a2a68 36%,#a02048 44%,#7a1a40 50%,#405858 54%,#3a5048 62%,#202a48 68%,#1a2040 76%,#2040a0 84%,#2a3a80 90%,#3aa0f0 94%,#48a8f0 100%)"></div><div style="left:3px;top:3.5px;width:11px;height:1.6px;background:#8a90e0;opacity:.8"></div><div style="left:20px;top:0.3px;width:8px;height:1.6px;background:#f0d0ff;opacity:.9"></div><div style="left:29px;top:3px;width:3px;height:1px;background:#f0f0f0;opacity:.8"></div><div style="left:79px;top:0.5px;width:12px;height:5px;background:repeating-linear-gradient(90deg,#e0e0f0 0 1px,#202040 1px 2.2px);opacity:.45"></div><div style="left:45.8px;top:2.6px;width:16.6px;height:3.4px;background:#62d048;border-radius:1px"></div><div style="left:68.5px;top:0;width:7.5px;height:1.6px;background:#f4f4f4"></div><div style="left:96.3px;top:0;width:1.3px;height:26.7px;background:#d0d0d0"></div><div style="left:28.2px;top:11.9px;width:40.5px;height:17.7px;background:repeating-linear-gradient(180deg,#e6e6e6 0 2.4px,#f0f0f0 2.4px 3.5px)"></div><div style="left:35.8px;top:11.9px;width:16px;height:2.9px;background:#a632a8"></div><div style="left:51.8px;top:11.9px;width:16.9px;height:2.9px;background:#6abf3a"></div><div style="left:43px;top:32.5px;width:9.2px;height:2.6px;border:0.8px solid #e4e4e4;border-radius:1.5px"></div><div style="left:45px;top:44px;width:5.8px;height:2.4px;background:#b8b8b8;opacity:.8"></div><div style="left:26px;top:48.6px;width:13.5px;height:1.4px;background:#808080;opacity:.8"></div><div style="left:26px;top:50.5px;width:44.9px;height:4.5px;background:#efefef"></div><div style="left:26px;top:50.5px;width:27.6px;height:2px;background:#c4c4c4"></div><div style="left:26px;top:53px;width:20.6px;height:2px;background:#c4c4c4"></div></div>
<div style="left:219.6px;top:94px;width:99px;height:58px;border:1.2px solid #d0d0d0;background:#fff;overflow:hidden"><div style="left:0;top:0;width:96.3px;height:6px;background:linear-gradient(90deg,#2a2050 0%,#44307a 8%,#6a4098 16%,#8450a8 24%,#9a60b0 30%,#7a2a68 36%,#a02048 44%,#7a1a40 50%,#405858 54%,#3a5048 62%,#202a48 68%,#1a2040 76%,#2040a0 84%,#2a3a80 90%,#3aa0f0 94%,#48a8f0 100%)"></div><div style="left:3px;top:3.5px;width:11px;height:1.6px;background:#8a90e0;opacity:.8"></div><div style="left:20px;top:0.3px;width:8px;height:1.6px;background:#f0d0ff;opacity:.9"></div><div style="left:29px;top:3px;width:3px;height:1px;background:#f0f0f0;opacity:.8"></div><div style="left:79px;top:0.5px;width:12px;height:5px;background:repeating-linear-gradient(90deg,#e0e0f0 0 1px,#202040 1px 2.2px);opacity:.45"></div><div style="left:45.8px;top:2.6px;width:16.6px;height:3.4px;background:#62d048;border-radius:1px"></div><div style="left:68.5px;top:0;width:7.5px;height:1.6px;background:#f4f4f4"></div><div style="left:96.3px;top:0;width:1.3px;height:26.7px;background:#d0d0d0"></div><div style="left:28.2px;top:11.9px;width:40.5px;height:17.7px;background:repeating-linear-gradient(180deg,#e6e6e6 0 2.4px,#f0f0f0 2.4px 3.5px)"></div><div style="left:35.8px;top:11.9px;width:16px;height:2.9px;background:#a632a8"></div><div style="left:51.8px;top:11.9px;width:16.9px;height:2.9px;background:#6abf3a"></div><div style="left:43px;top:32.5px;width:9.2px;height:2.6px;border:0.8px solid #e4e4e4;border-radius:1.5px"></div><div style="left:45px;top:44px;width:5.8px;height:2.4px;background:#b8b8b8;opacity:.8"></div><div style="left:26px;top:48.6px;width:13.5px;height:1.4px;background:#808080;opacity:.8"></div><div style="left:26px;top:50.5px;width:44.9px;height:4.5px;background:#efefef"></div><div style="left:26px;top:50.5px;width:27.6px;height:2px;background:#c4c4c4"></div><div style="left:26px;top:53px;width:20.6px;height:2px;background:#c4c4c4"></div></div>
<div style="left:320.6px;top:94px;width:99px;height:58px;border:1.2px solid #d0d0d0;background:#fff;overflow:hidden"><div style="left:0;top:0;width:96.3px;height:6px;background:linear-gradient(90deg,#2a2050 0%,#44307a 8%,#6a4098 16%,#8450a8 24%,#9a60b0 30%,#7a2a68 36%,#a02048 44%,#7a1a40 50%,#405858 54%,#3a5048 62%,#202a48 68%,#1a2040 76%,#2040a0 84%,#2a3a80 90%,#3aa0f0 94%,#48a8f0 100%)"></div><div style="left:3px;top:3.5px;width:11px;height:1.6px;background:#8a90e0;opacity:.8"></div><div style="left:20px;top:0.3px;width:8px;height:1.6px;background:#f0d0ff;opacity:.9"></div><div style="left:29px;top:3px;width:3px;height:1px;background:#f0f0f0;opacity:.8"></div><div style="left:79px;top:0.5px;width:12px;height:5px;background:repeating-linear-gradient(90deg,#e0e0f0 0 1px,#202040 1px 2.2px);opacity:.45"></div><div style="left:45.8px;top:2.6px;width:16.6px;height:3.4px;background:#62d048;border-radius:1px"></div><div style="left:68.5px;top:0;width:7.5px;height:1.6px;background:#f4f4f4"></div><div style="left:96.3px;top:0;width:1.3px;height:26.7px;background:#d0d0d0"></div><div style="left:28.2px;top:11.9px;width:40.5px;height:17.7px;background:repeating-linear-gradient(180deg,#e6e6e6 0 2.4px,#f0f0f0 2.4px 3.5px)"></div><div style="left:35.8px;top:11.9px;width:16px;height:2.9px;background:#a632a8"></div><div style="left:51.8px;top:11.9px;width:16.9px;height:2.9px;background:#6abf3a"></div><div style="left:43px;top:32.5px;width:9.2px;height:2.6px;border:0.8px solid #e4e4e4;border-radius:1.5px"></div><div style="left:45px;top:44px;width:5.8px;height:2.4px;background:#b8b8b8;opacity:.8"></div><div style="left:26px;top:48.6px;width:13.5px;height:1.4px;background:#808080;opacity:.8"></div><div style="left:26px;top:50.5px;width:44.9px;height:4.5px;background:#efefef"></div><div style="left:26px;top:50.5px;width:27.6px;height:2px;background:#c4c4c4"></div><div style="left:26px;top:53px;width:20.6px;height:2px;background:#c4c4c4"></div></div>
<div style="left:421.6px;top:94px;width:99px;height:58px;border:1.2px solid #d0d0d0;background:#fff;overflow:hidden"><div style="left:0;top:0;width:96.3px;height:6px;background:linear-gradient(90deg,#2a2050 0%,#44307a 8%,#6a4098 16%,#8450a8 24%,#9a60b0 30%,#7a2a68 36%,#a02048 44%,#7a1a40 50%,#405858 54%,#3a5048 62%,#202a48 68%,#1a2040 76%,#2040a0 84%,#2a3a80 90%,#3aa0f0 94%,#48a8f0 100%)"></div><div style="left:3px;top:3.5px;width:11px;height:1.6px;background:#8a90e0;opacity:.8"></div><div style="left:20px;top:0.3px;width:8px;height:1.6px;background:#f0d0ff;opacity:.9"></div><div style="left:29px;top:3px;width:3px;height:1px;background:#f0f0f0;opacity:.8"></div><div style="left:79px;top:0.5px;width:12px;height:5px;background:repeating-linear-gradient(90deg,#e0e0f0 0 1px,#202040 1px 2.2px);opacity:.45"></div><div style="left:45.8px;top:2.6px;width:16.6px;height:3.4px;background:#62d048;border-radius:1px"></div><div style="left:68.5px;top:0;width:7.5px;height:1.6px;background:#f4f4f4"></div><div style="left:96.3px;top:0;width:1.3px;height:26.7px;background:#d0d0d0"></div><div style="left:28.2px;top:11.9px;width:40.5px;height:17.7px;background:repeating-linear-gradient(180deg,#e6e6e6 0 2.4px,#f0f0f0 2.4px 3.5px)"></div><div style="left:35.8px;top:11.9px;width:16px;height:2.9px;background:#a632a8"></div><div style="left:51.8px;top:11.9px;width:16.9px;height:2.9px;background:#6abf3a"></div><div style="left:43px;top:32.5px;width:9.2px;height:2.6px;border:0.8px solid #e4e4e4;border-radius:1.5px"></div><div style="left:45px;top:44px;width:5.8px;height:2.4px;background:#b8b8b8;opacity:.8"></div><div style="left:26px;top:48.6px;width:13.5px;height:1.4px;background:#808080;opacity:.8"></div><div style="left:26px;top:50.5px;width:44.9px;height:4.5px;background:#efefef"></div><div style="left:26px;top:50.5px;width:27.6px;height:2px;background:#c4c4c4"></div><div style="left:26px;top:53px;width:20.6px;height:2px;background:#c4c4c4"></div></div>
<div style="left:522.6px;top:94px;width:99px;height:58px;border:1.2px solid #d0d0d0;background:#fff;overflow:hidden"><div style="left:0;top:0;width:96.3px;height:6px;background:linear-gradient(90deg,#2a2050 0%,#44307a 8%,#6a4098 16%,#8450a8 24%,#9a60b0 30%,#7a2a68 36%,#a02048 44%,#7a1a40 50%,#405858 54%,#3a5048 62%,#202a48 68%,#1a2040 76%,#2040a0 84%,#2a3a80 90%,#3aa0f0 94%,#48a8f0 100%)"></div><div style="left:3px;top:3.5px;width:11px;height:1.6px;background:#8a90e0;opacity:.8"></div><div style="left:20px;top:0.3px;width:8px;height:1.6px;background:#f0d0ff;opacity:.9"></div><div style="left:29px;top:3px;width:3px;height:1px;background:#f0f0f0;opacity:.8"></div><div style="left:79px;top:0.5px;width:12px;height:5px;background:repeating-linear-gradient(90deg,#e0e0f0 0 1px,#202040 1px 2.2px);opacity:.45"></div><div style="left:45.8px;top:2.6px;width:16.6px;height:3.4px;background:#62d048;border-radius:1px"></div><div style="left:68.5px;top:0;width:7.5px;height:1.6px;background:#f4f4f4"></div><div style="left:96.3px;top:0;width:1.3px;height:26.7px;background:#d0d0d0"></div><div style="left:28.2px;top:11.9px;width:40.5px;height:17.7px;background:repeating-linear-gradient(180deg,#e6e6e6 0 2.4px,#f0f0f0 2.4px 3.5px)"></div><div style="left:35.8px;top:11.9px;width:16px;height:2.9px;background:#a632a8"></div><div style="left:51.8px;top:11.9px;width:16.9px;height:2.9px;background:#6abf3a"></div><div style="left:43px;top:32.5px;width:9.2px;height:2.6px;border:0.8px solid #e4e4e4;border-radius:1.5px"></div><div style="left:45px;top:44px;width:5.8px;height:2.4px;background:#b8b8b8;opacity:.8"></div><div style="left:26px;top:48.6px;width:13.5px;height:1.4px;background:#808080;opacity:.8"></div><div style="left:26px;top:50.5px;width:44.9px;height:4.5px;background:#efefef"></div><div style="left:26px;top:50.5px;width:27.6px;height:2px;background:#c4c4c4"></div><div style="left:26px;top:53px;width:20.6px;height:2px;background:#c4c4c4"></div></div>
<div style="left:623.6px;top:94px;width:99px;height:58px;border:1.2px solid #d0d0d0;background:#fff;overflow:hidden"><div style="left:0;top:0;width:96.3px;height:6px;background:linear-gradient(90deg,#2a2050 0%,#44307a 8%,#6a4098 16%,#8450a8 24%,#9a60b0 30%,#7a2a68 36%,#a02048 44%,#7a1a40 50%,#405858 54%,#3a5048 62%,#202a48 68%,#1a2040 76%,#2040a0 84%,#2a3a80 90%,#3aa0f0 94%,#48a8f0 100%)"></div><div style="left:3px;top:3.5px;width:11px;height:1.6px;background:#8a90e0;opacity:.8"></div><div style="left:20px;top:0.3px;width:8px;height:1.6px;background:#f0d0ff;opacity:.9"></div><div style="left:29px;top:3px;width:3px;height:1px;background:#f0f0f0;opacity:.8"></div><div style="left:79px;top:0.5px;width:12px;height:5px;background:repeating-linear-gradient(90deg,#e0e0f0 0 1px,#202040 1px 2.2px);opacity:.45"></div><div style="left:45.8px;top:2.6px;width:16.6px;height:3.4px;background:#62d048;border-radius:1px"></div><div style="left:68.5px;top:0;width:7.5px;height:1.6px;background:#f4f4f4"></div><div style="left:96.3px;top:0;width:1.3px;height:26.7px;background:#d0d0d0"></div><div style="left:28.2px;top:11.9px;width:40.5px;height:17.7px;background:repeating-linear-gradient(180deg,#e6e6e6 0 2.4px,#f0f0f0 2.4px 3.5px)"></div><div style="left:35.8px;top:11.9px;width:16px;height:2.9px;background:#a632a8"></div><div style="left:51.8px;top:11.9px;width:16.9px;height:2.9px;background:#6abf3a"></div><div style="left:43px;top:32.5px;width:9.2px;height:2.6px;border:0.8px solid #e4e4e4;border-radius:1.5px"></div><div style="left:45px;top:44px;width:5.8px;height:2.4px;background:#b8b8b8;opacity:.8"></div><div style="left:26px;top:48.6px;width:13.5px;height:1.4px;background:#808080;opacity:.8"></div><div style="left:26px;top:50.5px;width:44.9px;height:4.5px;background:#efefef"></div><div style="left:26px;top:50.5px;width:27.6px;height:2px;background:#c4c4c4"></div><div style="left:26px;top:53px;width:20.6px;height:2px;background:#c4c4c4"></div></div>
<div style="left:724.6px;top:94px;width:99px;height:58px;border:1.2px solid #d0d0d0;background:#fff;overflow:hidden"><div style="left:0;top:0;width:96.3px;height:6px;background:linear-gradient(90deg,#2a2050 0%,#44307a 8%,#6a4098 16%,#8450a8 24%,#9a60b0 30%,#7a2a68 36%,#a02048 44%,#7a1a40 50%,#405858 54%,#3a5048 62%,#202a48 68%,#1a2040 76%,#2040a0 84%,#2a3a80 90%,#3aa0f0 94%,#48a8f0 100%)"></div><div style="left:3px;top:3.5px;width:11px;height:1.6px;background:#8a90e0;opacity:.8"></div><div style="left:20px;top:0.3px;width:8px;height:1.6px;background:#f0d0ff;opacity:.9"></div><div style="left:29px;top:3px;width:3px;height:1px;background:#f0f0f0;opacity:.8"></div><div style="left:79px;top:0.5px;width:12px;height:5px;background:repeating-linear-gradient(90deg,#e0e0f0 0 1px,#202040 1px 2.2px);opacity:.45"></div><div style="left:45.8px;top:2.6px;width:16.6px;height:3.4px;background:#62d048;border-radius:1px"></div><div style="left:68.5px;top:0;width:7.5px;height:1.6px;background:#f4f4f4"></div><div style="left:96.3px;top:0;width:1.3px;height:26.7px;background:#d0d0d0"></div><div style="left:28.2px;top:11.9px;width:40.5px;height:17.7px;background:repeating-linear-gradient(180deg,#e6e6e6 0 2.4px,#f0f0f0 2.4px 3.5px)"></div><div style="left:35.8px;top:11.9px;width:16px;height:2.9px;background:#a632a8"></div><div style="left:51.8px;top:11.9px;width:16.9px;height:2.9px;background:#6abf3a"></div><div style="left:43px;top:32.5px;width:9.2px;height:2.6px;border:0.8px solid #e4e4e4;border-radius:1.5px"></div><div style="left:45px;top:44px;width:5.8px;height:2.4px;background:#b8b8b8;opacity:.8"></div><div style="left:26px;top:48.6px;width:13.5px;height:1.4px;background:#808080;opacity:.8"></div><div style="left:26px;top:50.5px;width:44.9px;height:4.5px;background:#efefef"></div><div style="left:26px;top:50.5px;width:27.6px;height:2px;background:#c4c4c4"></div><div style="left:26px;top:53px;width:20.6px;height:2px;background:#c4c4c4"></div></div>
<div style="left:825.6px;top:94px;width:99px;height:58px;border:1.2px solid #d0d0d0;background:#fff;overflow:hidden"><div style="left:0;top:0;width:96.3px;height:6px;background:linear-gradient(90deg,#2a2050 0%,#44307a 8%,#6a4098 16%,#8450a8 24%,#9a60b0 30%,#7a2a68 36%,#a02048 44%,#7a1a40 50%,#405858 54%,#3a5048 62%,#202a48 68%,#1a2040 76%,#2040a0 84%,#2a3a80 90%,#3aa0f0 94%,#48a8f0 100%)"></div><div style="left:3px;top:3.5px;width:11px;height:1.6px;background:#8a90e0;opacity:.8"></div><div style="left:20px;top:0.3px;width:8px;height:1.6px;background:#f0d0ff;opacity:.9"></div><div style="left:29px;top:3px;width:3px;height:1px;background:#f0f0f0;opacity:.8"></div><div style="left:79px;top:0.5px;width:12px;height:5px;background:repeating-linear-gradient(90deg,#e0e0f0 0 1px,#202040 1px 2.2px);opacity:.45"></div><div style="left:45.8px;top:2.6px;width:16.6px;height:3.4px;background:#62d048;border-radius:1px"></div><div style="left:68.5px;top:0;width:7.5px;height:1.6px;background:#f4f4f4"></div><div style="left:96.3px;top:0;width:1.3px;height:26.7px;background:#d0d0d0"></div><div style="left:28.2px;top:11.9px;width:40.5px;height:17.7px;background:repeating-linear-gradient(180deg,#e6e6e6 0 2.4px,#f0f0f0 2.4px 3.5px)"></div><div style="left:35.8px;top:11.9px;width:16px;height:2.9px;background:#a632a8"></div><div style="left:51.8px;top:11.9px;width:16.9px;height:2.9px;background:#6abf3a"></div><div style="left:43px;top:32.5px;width:9.2px;height:2.6px;border:0.8px solid #e4e4e4;border-radius:1.5px"></div><div style="left:45px;top:44px;width:5.8px;height:2.4px;background:#b8b8b8;opacity:.8"></div><div style="left:26px;top:48.6px;width:13.5px;height:1.4px;background:#808080;opacity:.8"></div><div style="left:26px;top:50.5px;width:44.9px;height:4.5px;background:#efefef"></div><div style="left:26px;top:50.5px;width:27.6px;height:2px;background:#c4c4c4"></div><div style="left:26px;top:53px;width:20.6px;height:2px;background:#c4c4c4"></div></div>
<div style="left:926.6px;top:94px;width:99px;height:58px;border:1.2px solid #d0d0d0;background:#fff;overflow:hidden"><div style="left:0;top:0;width:96.3px;height:6px;background:linear-gradient(90deg,#2a2050 0%,#44307a 8%,#6a4098 16%,#8450a8 24%,#9a60b0 30%,#7a2a68 36%,#a02048 44%,#7a1a40 50%,#405858 54%,#3a5048 62%,#202a48 68%,#1a2040 76%,#2040a0 84%,#2a3a80 90%,#3aa0f0 94%,#48a8f0 100%)"></div><div style="left:3px;top:3.5px;width:11px;height:1.6px;background:#8a90e0;opacity:.8"></div><div style="left:20px;top:0.3px;width:8px;height:1.6px;background:#f0d0ff;opacity:.9"></div><div style="left:29px;top:3px;width:3px;height:1px;background:#f0f0f0;opacity:.8"></div><div style="left:79px;top:0.5px;width:12px;height:5px;background:repeating-linear-gradient(90deg,#e0e0f0 0 1px,#202040 1px 2.2px);opacity:.45"></div><div style="left:45.8px;top:2.6px;width:16.6px;height:3.4px;background:#62d048;border-radius:1px"></div><div style="left:68.5px;top:0;width:7.5px;height:1.6px;background:#f4f4f4"></div><div style="left:96.3px;top:0;width:1.3px;height:26.7px;background:#d0d0d0"></div><div style="left:28.2px;top:11.9px;width:40.5px;height:17.7px;background:repeating-linear-gradient(180deg,#e6e6e6 0 2.4px,#f0f0f0 2.4px 3.5px)"></div><div style="left:35.8px;top:11.9px;width:16px;height:2.9px;background:#a632a8"></div><div style="left:51.8px;top:11.9px;width:16.9px;height:2.9px;background:#6abf3a"></div><div style="left:43px;top:32.5px;width:9.2px;height:2.6px;border:0.8px solid #e4e4e4;border-radius:1.5px"></div><div style="left:45px;top:44px;width:5.8px;height:2.4px;background:#b8b8b8;opacity:.8"></div><div style="left:26px;top:48.6px;width:13.5px;height:1.4px;background:#808080;opacity:.8"></div><div style="left:26px;top:50.5px;width:44.9px;height:4.5px;background:#efefef"></div><div style="left:26px;top:50.5px;width:27.6px;height:2px;background:#c4c4c4"></div><div style="left:26px;top:53px;width:20.6px;height:2px;background:#c4c4c4"></div></div>
<div style="left:1027.6px;top:94px;width:99px;height:58px;border:1.2px solid #d0d0d0;background:#fff;overflow:hidden"><div style="left:0;top:0;width:96.3px;height:6px;background:linear-gradient(90deg,#2a2050 0%,#44307a 8%,#6a4098 16%,#8450a8 24%,#9a60b0 30%,#7a2a68 36%,#a02048 44%,#7a1a40 50%,#405858 54%,#3a5048 62%,#202a48 68%,#1a2040 76%,#2040a0 84%,#2a3a80 90%,#3aa0f0 94%,#48a8f0 100%)"></div><div style="left:3px;top:3.5px;width:11px;height:1.6px;background:#8a90e0;opacity:.8"></div><div style="left:20px;top:0.3px;width:8px;height:1.6px;background:#f0d0ff;opacity:.9"></div><div style="left:29px;top:3px;width:3px;height:1px;background:#f0f0f0;opacity:.8"></div><div style="left:79px;top:0.5px;width:12px;height:5px;background:repeating-linear-gradient(90deg,#e0e0f0 0 1px,#202040 1px 2.2px);opacity:.45"></div><div style="left:45.8px;top:2.6px;width:16.6px;height:3.4px;background:#62d048;border-radius:1px"></div><div style="left:68.5px;top:0;width:7.5px;height:1.6px;background:#f4f4f4"></div><div style="left:96.3px;top:0;width:1.3px;height:26.7px;background:#d0d0d0"></div><div style="left:28.2px;top:11.9px;width:40.5px;height:17.7px;background:repeating-linear-gradient(180deg,#e6e6e6 0 2.4px,#f0f0f0 2.4px 3.5px)"></div><div style="left:35.8px;top:11.9px;width:16px;height:2.9px;background:#a632a8"></div><div style="left:51.8px;top:11.9px;width:16.9px;height:2.9px;background:#6abf3a"></div><div style="left:43px;top:32.5px;width:9.2px;height:2.6px;border:0.8px solid #e4e4e4;border-radius:1.5px"></div><div style="left:45px;top:44px;width:5.8px;height:2.4px;background:#b8b8b8;opacity:.8"></div><div style="left:26px;top:48.6px;width:13.5px;height:1.4px;background:#808080;opacity:.8"></div><div style="left:26px;top:50.5px;width:44.9px;height:4.5px;background:#efefef"></div><div style="left:26px;top:50.5px;width:27.6px;height:2px;background:#c4c4c4"></div><div style="left:26px;top:53px;width:20.6px;height:2px;background:#c4c4c4"></div></div>
<div style="left:1128.6px;top:94px;width:99px;height:58px;border:1.2px solid #d0d0d0;background:#fff;overflow:hidden"><div style="left:0;top:0;width:96.3px;height:6px;background:linear-gradient(90deg,#2a2050 0%,#44307a 8%,#6a4098 16%,#8450a8 24%,#9a60b0 30%,#7a2a68 36%,#a02048 44%,#7a1a40 50%,#405858 54%,#3a5048 62%,#202a48 68%,#1a2040 76%,#2040a0 84%,#2a3a80 90%,#3aa0f0 94%,#48a8f0 100%)"></div><div style="left:3px;top:3.5px;width:11px;height:1.6px;background:#8a90e0;opacity:.8"></div><div style="left:20px;top:0.3px;width:8px;height:1.6px;background:#f0d0ff;opacity:.9"></div><div style="left:29px;top:3px;width:3px;height:1px;background:#f0f0f0;opacity:.8"></div><div style="left:79px;top:0.5px;width:12px;height:5px;background:repeating-linear-gradient(90deg,#e0e0f0 0 1px,#202040 1px 2.2px);opacity:.45"></div><div style="left:45.8px;top:2.6px;width:16.6px;height:3.4px;background:#62d048;border-radius:1px"></div><div style="left:68.5px;top:0;width:7.5px;height:1.6px;background:#f4f4f4"></div><div style="left:96.3px;top:0;width:1.3px;height:26.7px;background:#d0d0d0"></div><div style="left:28.2px;top:11.9px;width:40.5px;height:17.7px;background:repeating-linear-gradient(180deg,#e6e6e6 0 2.4px,#f0f0f0 2.4px 3.5px)"></div><div style="left:35.8px;top:11.9px;width:16px;height:2.9px;background:#a632a8"></div><div style="left:51.8px;top:11.9px;width:16.9px;height:2.9px;background:#6abf3a"></div><div style="left:43px;top:32.5px;width:9.2px;height:2.6px;border:0.8px solid #e4e4e4;border-radius:1.5px"></div><div style="left:45px;top:44px;width:5.8px;height:2.4px;background:#b8b8b8;opacity:.8"></div><div style="left:26px;top:48.6px;width:13.5px;height:1.4px;background:#808080;opacity:.8"></div><div style="left:26px;top:50.5px;width:44.9px;height:4.5px;background:#efefef"></div><div style="left:26px;top:50.5px;width:27.6px;height:2px;background:#c4c4c4"></div><div style="left:26px;top:53px;width:20.6px;height:2px;background:#c4c4c4"></div></div>
<div style="left:1229.6px;top:94px;width:99px;height:58px;border:1.2px solid #d0d0d0;background:#fff;overflow:hidden"><div style="left:0;top:0;width:96.3px;height:6px;background:linear-gradient(90deg,#2a2050 0%,#44307a 8%,#6a4098 16%,#8450a8 24%,#9a60b0 30%,#7a2a68 36%,#a02048 44%,#7a1a40 50%,#405858 54%,#3a5048 62%,#202a48 68%,#1a2040 76%,#2040a0 84%,#2a3a80 90%,#3aa0f0 94%,#48a8f0 100%)"></div><div style="left:3px;top:3.5px;width:11px;height:1.6px;background:#8a90e0;opacity:.8"></div><div style="left:20px;top:0.3px;width:8px;height:1.6px;background:#f0d0ff;opacity:.9"></div><div style="left:29px;top:3px;width:3px;height:1px;background:#f0f0f0;opacity:.8"></div><div style="left:79px;top:0.5px;width:12px;height:5px;background:repeating-linear-gradient(90deg,#e0e0f0 0 1px,#202040 1px 2.2px);opacity:.45"></div><div style="left:45.8px;top:2.6px;width:16.6px;height:3.4px;background:#62d048;border-radius:1px"></div><div style="left:68.5px;top:0;width:7.5px;height:1.6px;background:#f4f4f4"></div><div style="left:96.3px;top:0;width:1.3px;height:26.7px;background:#d0d0d0"></div><div style="left:28.2px;top:11.9px;width:40.5px;height:17.7px;background:repeating-linear-gradient(180deg,#e6e6e6 0 2.4px,#f0f0f0 2.4px 3.5px)"></div><div style="left:35.8px;top:11.9px;width:16px;height:2.9px;background:#a632a8"></div><div style="left:51.8px;top:11.9px;width:16.9px;height:2.9px;background:#6abf3a"></div><div style="left:43px;top:32.5px;width:9.2px;height:2.6px;border:0.8px solid #e4e4e4;border-radius:1.5px"></div><div style="left:45px;top:44px;width:5.8px;height:2.4px;background:#b8b8b8;opacity:.8"></div><div style="left:26px;top:48.6px;width:13.5px;height:1.4px;background:#808080;opacity:.8"></div><div style="left:26px;top:50.5px;width:44.9px;height:4.5px;background:#efefef"></div><div style="left:26px;top:50.5px;width:27.6px;height:2px;background:#c4c4c4"></div><div style="left:26px;top:53px;width:20.6px;height:2px;background:#c4c4c4"></div></div>
<div style="left:0px;top:154px;width:1264px;height:2px;background:#d6e4fb;"></div>
<div style="left:40px;top:157px;width:2px;height:29px;background:#eef3fd;"></div>
<div style="left:40px;top:186px;width:2px;height:290px;background:#e2eaf9;"></div>
<div style="left:248px;top:157px;width:2px;height:29px;background:#eef3fd;"></div>
<div style="left:248px;top:186px;width:2px;height:290px;background:#e2eaf9;"></div>
<div style="left:454px;top:157px;width:2px;height:29px;background:#eef3fd;"></div>
<div style="left:454px;top:186px;width:2px;height:290px;background:#e2eaf9;"></div>
<div style="left:660px;top:157px;width:2px;height:29px;background:#eef3fd;"></div>
<div style="left:660px;top:186px;width:2px;height:290px;background:#e2eaf9;"></div>
<div style="left:866px;top:157px;width:2px;height:29px;background:#eef3fd;"></div>
<div style="left:866px;top:186px;width:2px;height:290px;background:#e2eaf9;"></div>
<div style="left:1072px;top:157px;width:2px;height:29px;background:#eef3fd;"></div>
<div style="left:1072px;top:186px;width:2px;height:290px;background:#e2eaf9;"></div>
<div class="rl" style="right:1232.0px;top:160px;line-height:26px;letter-spacing:0.3px">ms</div>
<div class="rl" style="right:1024.0px;top:160px;line-height:26px;letter-spacing:0.3px">1,500 ms</div>
<div class="rl" style="right:818.0px;top:160px;line-height:26px;letter-spacing:0.3px">1,600 ms</div>
<div class="rl" style="right:612.0px;top:160px;line-height:26px;letter-spacing:0.3px">1,700 ms</div>
<div class="rl" style="right:406.0px;top:160px;line-height:26px;letter-spacing:0.3px">1,800 ms</div>
<div class="rl" style="right:200.0px;top:160px;line-height:26px;letter-spacing:0.3px">1,900 ms</div>
<div class="rl" style="left:1174.7px;top:160px;line-height:26px;text-align:left;letter-spacing:0.3px">2,000 ms</div>
<div style="left:1244.6px;top:224px;width:40px;height:32px;background:#e4f6e8;will-change:transform;border:1px solid #7fd893;font-size:22.5px;line-height:30px;color:#1f1f1f;padding-left:7px">2</div>
<div style="left:1246px;top:258px;width:40px;height:32px;background:#e4f6e8;will-change:transform;border:1px solid #7fd893;font-size:22.5px;line-height:30px;color:#1f1f1f;padding-left:7px">1</div>
<div style="left:1242.5px;top:269px;width:2.0px;height:11px;background:#c8c8c8;"></div>
<div style="left:1244.5px;top:273.8px;width:1.5px;height:1.1999999999999886px;background:#d4d4d4;"></div>
<div style="left:1248px;top:292px;width:40px;height:32px;background:#e4f6e8;will-change:transform;border:1px solid #7fd893;font-size:22.5px;line-height:30px;color:#1f1f1f;padding-left:7px">2</div>
<div style="left:1244.5px;top:303px;width:2.0px;height:11px;background:#c8c8c8;"></div>
<div style="left:1246.5px;top:307.8px;width:1.5px;height:1.1999999999999886px;background:#d4d4d4;"></div>
<div style="left:1248px;top:326px;width:40px;height:32px;background:#e4f6e8;will-change:transform;border:1px solid #7fd893;font-size:22.5px;line-height:30px;color:#1f1f1f;padding-left:7px">2</div>
<div style="left:1244.5px;top:337px;width:2.0px;height:11px;background:#c8c8c8;"></div>
<div style="left:1246.5px;top:341.8px;width:1.5px;height:1.1999999999999886px;background:#d4d4d4;"></div>
<div style="left:1250px;top:360px;width:40px;height:32px;background:#e4f6e8;will-change:transform;border:1px solid #7fd893;font-size:22.5px;line-height:30px;color:#1f1f1f;padding-left:7px">1</div>
<div style="left:1246.5px;top:371px;width:2.0px;height:11px;background:#c8c8c8;"></div>
<div style="left:1248.5px;top:375.8px;width:1.5px;height:1.1999999999999886px;background:#d4d4d4;"></div>
<div style="left:1250px;top:394px;width:40px;height:32px;background:#e4f6e8;will-change:transform;border:1px solid #7fd893;font-size:22.5px;line-height:30px;color:#1f1f1f;padding-left:7px">1</div>
<div style="left:1246.5px;top:405px;width:2.0px;height:11px;background:#c8c8c8;"></div>
<div style="left:1248.5px;top:409.8px;width:1.5px;height:1.1999999999999886px;background:#d4d4d4;"></div>
<div style="left:1250px;top:428px;width:40px;height:32px;background:#e4f6e8;will-change:transform;border:1px solid #7fd893;font-size:22.5px;line-height:30px;color:#1f1f1f;padding-left:7px">1</div>
<div style="left:1246.5px;top:439px;width:2.0px;height:11px;background:#c8c8c8;"></div>
<div style="left:1248.5px;top:443.8px;width:1.5px;height:1.1999999999999886px;background:#d4d4d4;"></div>
<div style="left:1251px;top:462px;width:40px;height:32px;background:#e4f6e8;will-change:transform;border:1px solid #7fd893;font-size:22.5px;line-height:30px;color:#1f1f1f;padding-left:7px">2</div>
<div style="left:1247.5px;top:473px;width:2.0px;height:11px;background:#c8c8c8;"></div>
<div style="left:1249.5px;top:477.8px;width:1.5px;height:1.1999999999999886px;background:#d4d4d4;"></div>
<div style="left:1232.5px;top:224px;width:4.2999999999999545px;height:32px;background:#5fd07f;"></div>
<div style="left:1232.6px;top:235px;width:1.6000000000001364px;height:12px;background:#c4c4c4;"></div>
<div style="left:1235.2px;top:235px;width:1.2000000000000455px;height:12px;background:#c4c4c4;"></div>
<div style="left:1238px;top:235px;width:2px;height:12px;background:#c8c8c8;"></div>
<div style="left:1240px;top:240px;width:4.599999999999909px;height:1.5px;background:#c8c8c8;"></div>
<div style="left:0px;top:476px;width:1264px;height:2px;background:#d6e4fb;"></div>
<div style="left:0px;top:478px;width:1264px;height:12px;background:#f3f5fb;"></div>
<div style="left:0px;top:490px;width:1264px;height:2px;background:#d6e4fb;"></div>
<div style="left:303.8px;top:481.8px;width:4.4px;height:4.4px;border-radius:50%;background:#1f1f1f"></div>
<div style="left:311.8px;top:481.8px;width:4.4px;height:4.4px;border-radius:50%;background:#1f1f1f"></div>
<div style="left:319.8px;top:481.8px;width:4.4px;height:4.4px;border-radius:50%;background:#1f1f1f"></div>
<div style="left:0;top:492px;width:1264px;height:452px;overflow:hidden">
<div class="fr" style="left:10px;top:-3px;width:1px;height:32px;background:#c6c6c6;"></div>
<div class="fr" style="left:20px;top:-3px;width:667px;height:32px;background:#c6c6c6;"><span style="left:10.45px;">Task</span></div>
<div class="fr" style="left:688px;top:-3px;width:7px;height:32px;background:#c6c6c6;"></div>
<div class="fr" style="left:696px;top:-3px;width:568px;height:32px;background:#c6c6c6;"><span style="left:10.7px;">Task</span></div>
<div class="fr" style="left:20px;top:31px;width:667px;height:32px;background:#facd16;"><span style="left:10.45px;">Event: click</span></div>
<div class="fr" style="left:688px;top:31px;width:5px;height:32px;background:#d595f5;"></div>
<div class="fr" style="left:694px;top:31px;width:1px;height:32px;background:#d595f5;"></div>
<div class="fr" style="left:1230px;top:31px;width:34px;height:32px;background:#facd16;"></div>
<div class="fr" style="left:696px;top:31px;width:530px;height:34px;background:#d4c079;border:4px solid #0b57d0;line-height:26px"><span style="left:6.2px;color:#4a5a7e">Function call</span></div>
<div class="fr" style="left:20px;top:65px;width:7px;height:32px;background:#facd16;"></div>
<div class="fr" style="left:28px;top:65px;width:645px;height:32px;background:#facd16;"><span style="left:9.999999999999996px;">Function call</span></div>
<div class="fr" style="left:674px;top:65px;width:1px;height:32px;background:#bdbdbd;"></div>
<div class="fr" style="left:676px;top:65px;width:5px;height:32px;background:#facd16;"></div>
<div class="fr" style="left:688px;top:65px;width:1px;height:32px;background:#facd16;"></div>
<div class="fr" style="left:700px;top:65px;width:525px;height:32px;background:#b9eaf6;"><span style="left:10.2px;">performWorkUntilDeadline</span></div>
<div class="fr" style="left:1232.0px;top:65px;width:1.0px;height:32px;background:#82aef2;"></div>
<div class="fr" style="left:1238.0px;top:65px;width:1.0px;height:32px;background:#82aef2;"></div>
<div class="fr" style="left:1242.0px;top:65px;width:1.0px;height:32px;background:#82aef2;"></div>
<div class="fr" style="left:1244.1px;top:65px;width:1.0px;height:32px;background:#82aef2;"></div>
<div class="fr" style="left:1246.0px;top:65px;width:1.0px;height:32px;background:#82aef2;"></div>
<div class="fr" style="left:1248.0px;top:65px;width:1.0px;height:32px;background:#82aef2;"></div>
<div class="fr" style="left:1256.0px;top:65px;width:1.0px;height:32px;background:#82aef2;"></div>
<div class="fr" style="left:1258.1px;top:65px;width:1.0px;height:32px;background:#82aef2;"></div>
<div class="fr" style="left:20px;top:99px;width:1px;height:32px;background:#facd16;"></div>
<div class="fr" style="left:32px;top:99px;width:641px;height:32px;background:#b9eaf6;"><span style="left:10.2px;">dispatchDiscreteEvent</span></div>
<div class="fr" style="left:676px;top:99px;width:5px;height:32px;background:#facd16;"></div>
<div class="fr" style="left:682px;top:99px;width:1px;height:32px;background:#facd16;"></div>
<div class="fr" style="left:700px;top:99px;width:525px;height:32px;background:#b9eaf6;"><span style="left:10.2px;">flushWork</span></div>
<div class="fr" style="left:32px;top:133px;width:641px;height:32px;background:#b9eaf6;"><span style="left:10.2px;">discreteUpdates</span></div>
<div class="fr" style="left:676px;top:133px;width:1px;height:32px;background:#f3d3b0;"></div>
<div class="fr" style="left:700px;top:133px;width:525px;height:32px;background:#b9eaf6;"><span style="left:10.2px;">workLoop</span></div>
<div class="fr" style="left:32px;top:167px;width:641px;height:32px;background:#b9eaf6;"><span style="left:10.2px;">discreteUpdates$1</span></div>
<div class="fr" style="left:676px;top:167px;width:1px;height:32px;background:#c5ecc5;"></div>
<div class="fr" style="left:700px;top:167px;width:525px;height:32px;background:#b9eaf6;"><span style="left:10.2px;">flushSyncCallbackQueueImpl</span></div>
<div class="fr" style="left:32px;top:201px;width:13px;height:32px;background:#b9eaf6;"></div>
<div class="fr" style="left:46px;top:201px;width:627px;height:32px;background:#b9eaf6;"><span style="left:9.7px;">flushSyncCallbackQueue</span></div>
<div class="fr" style="left:32px;top:235px;width:13px;height:32px;background:#b9eaf6;"></div>
<div class="fr" style="left:46px;top:235px;width:627px;height:32px;background:#b9eaf6;"><span style="left:9.7px;">flushSyncCallbackQueueImpl</span></div>
<div class="fr" style="left:32px;top:269px;width:13px;height:32px;background:#b9eaf6;"></div>
<div class="fr" style="left:46px;top:269px;width:627px;height:32px;background:#b9eaf6;"><span style="left:9.7px;">runWithPriority$1</span></div>
<div class="fr" style="left:32px;top:303px;width:13px;height:32px;background:#b9eaf6;"></div>
<div class="fr" style="left:46px;top:303px;width:627px;height:32px;background:#b9eaf6;"><span style="left:9.7px;">unstable_runWithPriority</span></div>
<div class="fr" style="left:32px;top:337px;width:13px;height:32px;background:#b9eaf6;"></div>
<div class="fr" style="left:46px;top:337px;width:627px;height:32px;background:#b9eaf6;"><span style="left:9.7px;">(anonymous)</span></div>
<div class="fr" style="left:32px;top:371px;width:13px;height:32px;background:#b9eaf6;"></div>
<div class="fr" style="left:46px;top:371px;width:627px;height:32px;background:#b9eaf6;"><span style="left:9.7px;">performSyncWorkOnRoot</span></div>
<div class="fr" style="left:676px;top:201px;width:1px;height:32px;background:#facd16;"></div>
<div class="fr" style="left:676px;top:235px;width:1px;height:32px;background:#2aa8c8;"></div>
<div class="fr" style="left:700px;top:201px;width:525px;height:32px;background:#b9eaf6;"><span style="left:10.2px;">runWithPriority$1</span></div>
<div class="fr" style="left:700px;top:235px;width:525px;height:32px;background:#b9eaf6;"><span style="left:10.2px;">unstable_runWithPriority</span></div>
<div class="fr" style="left:700px;top:269px;width:525px;height:32px;background:#b9eaf6;"><span style="left:10.2px;">(anonymous)</span></div>
<div class="fr" style="left:700px;top:303px;width:525px;height:32px;background:#b9eaf6;"><span style="left:10.2px;">performSyncWorkOnRoot</span></div>
<div class="fr" style="left:700px;top:337px;width:459px;height:32px;background:#b9eaf6;"><span style="left:10.2px;">workLoopSync</span></div>
<div class="fr" style="left:1160px;top:337px;width:65px;height:32px;background:#b9eaf6;"><span style="left:9.799999999999908px;">fi<i style="font-style:normal;letter-spacing:-0.9px;margin-right:0.5px">...</i>r</span></div>
<div class="fr" style="left:700px;top:371px;width:207px;height:32px;background:#b9eaf6;"><span style="left:10.2px;">perform<i style="font-style:normal;letter-spacing:-0.9px;margin-right:0.5px">...</i>OfWork</span></div>
<div class="fr" style="left:908px;top:371px;width:251px;height:32px;background:#b9eaf6;"><span style="left:10.2px;">performUnitOfWork</span></div>
<div class="fr" style="left:1160px;top:371px;width:65px;height:32px;background:#b9eaf6;"><span style="left:9.799999999999908px;">c<i style="font-style:normal;letter-spacing:-0.9px;margin-right:0.5px">...</i>t</span></div>
<div class="fr" style="left:32px;top:405px;width:13px;height:32px;background:#b9eaf6;"></div>
<div class="fr" style="left:46px;top:405px;width:7px;height:32px;background:#b9eaf6;"></div>
<div class="fr" style="left:54px;top:405px;width:563px;height:32px;background:#b9eaf6;"><span style="left:10.7px;">workLoopSync</span></div>
<div class="fr" style="left:618px;top:405px;width:5px;height:32px;background:#b9eaf6;"></div>
<div class="fr" style="left:624px;top:405px;width:49px;height:32px;background:#b9eaf6;"><span style="left:9.599999999999977px;">f<i style="font-style:normal;letter-spacing:-0.9px;margin-right:0.5px">...</i></span></div>
<div class="fr" style="left:700px;top:405px;width:525px;height:32px;background:#b9eaf6;"></div>
<div class="fr" style="left:32px;top:439px;width:13px;height:32px;background:#b9eaf6;"></div>
<div class="fr" style="left:46px;top:439px;width:7px;height:32px;background:#b9eaf6;"></div>
<div class="fr" style="left:54px;top:439px;width:563px;height:32px;background:#b9eaf6;"><span style="left:10.7px;">performUnitOfWork</span></div>
<div class="fr" style="left:618px;top:439px;width:5px;height:32px;background:#b9eaf6;"></div>
<div class="fr" style="left:624px;top:439px;width:49px;height:32px;background:#b9eaf6;"></div>
<div class="fr" style="left:700px;top:439px;width:525px;height:32px;background:#b9eaf6;"></div>
<div style="left:709px;top:405px;width:1px;height:32px;background:#fff;"></div>
<div style="left:725px;top:405px;width:1px;height:32px;background:#fff;"></div>
<div style="left:738px;top:405px;width:1px;height:32px;background:#fff;"></div>
<div style="left:754px;top:405px;width:1px;height:32px;background:#fff;"></div>
<div style="left:762px;top:405px;width:1px;height:32px;background:#fff;"></div>
<div style="left:770px;top:405px;width:1px;height:32px;background:#fff;"></div>
<div style="left:784px;top:405px;width:1px;height:32px;background:#fff;"></div>
<div style="left:793px;top:405px;width:1px;height:32px;background:#fff;"></div>
<div style="left:795px;top:405px;width:1px;height:32px;background:#fff;"></div>
<div style="left:806px;top:405px;width:1px;height:32px;background:#fff;"></div>
<div style="left:817px;top:405px;width:1px;height:32px;background:#fff;"></div>
<div style="left:840px;top:405px;width:1px;height:32px;background:#fff;"></div>
<div style="left:907px;top:405px;width:1px;height:32px;background:#fff;"></div>
<div style="left:921px;top:405px;width:1px;height:32px;background:#fff;"></div>
<div style="left:930px;top:405px;width:1px;height:32px;background:#fff;"></div>
<div style="left:946px;top:405px;width:1px;height:32px;background:#fff;"></div>
<div style="left:955px;top:405px;width:1px;height:32px;background:#fff;"></div>
<div style="left:959px;top:405px;width:1px;height:32px;background:#fff;"></div>
<div style="left:982px;top:405px;width:1px;height:32px;background:#fff;"></div>
<div style="left:992px;top:405px;width:1px;height:32px;background:#fff;"></div>
<div style="left:1016px;top:405px;width:1px;height:32px;background:#fff;"></div>
<div style="left:1020px;top:405px;width:1px;height:32px;background:#fff;"></div>
<div style="left:1036px;top:405px;width:1px;height:32px;background:#fff;"></div>
<div style="left:1042px;top:405px;width:1px;height:32px;background:#fff;"></div>
<div style="left:1047px;top:405px;width:1px;height:32px;background:#fff;"></div>
<div style="left:1049px;top:405px;width:1px;height:32px;background:#fff;"></div>
<div style="left:1057px;top:405px;width:1px;height:32px;background:#fff;"></div>
<div style="left:1061px;top:405px;width:1px;height:32px;background:#fff;"></div>
<div style="left:1063px;top:405px;width:1px;height:32px;background:#fff;"></div>
<div style="left:1069px;top:405px;width:1px;height:32px;background:#fff;"></div>
<div style="left:1078px;top:405px;width:1px;height:32px;background:#fff;"></div>
<div style="left:1086px;top:405px;width:1px;height:32px;background:#fff;"></div>
<div style="left:1094px;top:405px;width:1px;height:32px;background:#fff;"></div>
<div style="left:1104px;top:405px;width:1px;height:32px;background:#fff;"></div>
<div style="left:1110px;top:405px;width:1px;height:32px;background:#fff;"></div>
<div style="left:1119px;top:405px;width:1px;height:32px;background:#fff;"></div>
<div style="left:1142px;top:405px;width:1px;height:32px;background:#fff;"></div>
<div style="left:1148px;top:405px;width:1px;height:32px;background:#fff;"></div>
<div style="left:1160px;top:405px;width:1px;height:32px;background:#fff;"></div>
<div style="left:709px;top:439px;width:1px;height:32px;background:#fff;"></div>
<div style="left:725px;top:439px;width:1px;height:32px;background:#fff;"></div>
<div style="left:738px;top:439px;width:1px;height:32px;background:#fff;"></div>
<div style="left:754px;top:439px;width:1px;height:32px;background:#fff;"></div>
<div style="left:762px;top:439px;width:1px;height:32px;background:#fff;"></div>
<div style="left:770px;top:439px;width:1px;height:32px;background:#fff;"></div>
<div style="left:784px;top:439px;width:1px;height:32px;background:#fff;"></div>
<div style="left:793px;top:439px;width:1px;height:32px;background:#fff;"></div>
<div style="left:795px;top:439px;width:1px;height:32px;background:#fff;"></div>
<div style="left:806px;top:439px;width:1px;height:32px;background:#fff;"></div>
<div style="left:817px;top:439px;width:1px;height:32px;background:#fff;"></div>
<div style="left:840px;top:439px;width:1px;height:32px;background:#fff;"></div>
<div style="left:907px;top:439px;width:1px;height:32px;background:#fff;"></div>
<div style="left:921px;top:439px;width:1px;height:32px;background:#fff;"></div>
<div style="left:930px;top:439px;width:1px;height:32px;background:#fff;"></div>
<div style="left:946px;top:439px;width:1px;height:32px;background:#fff;"></div>
<div style="left:955px;top:439px;width:1px;height:32px;background:#fff;"></div>
<div style="left:959px;top:439px;width:1px;height:32px;background:#fff;"></div>
<div style="left:982px;top:439px;width:1px;height:32px;background:#fff;"></div>
<div style="left:992px;top:439px;width:1px;height:32px;background:#fff;"></div>
<div style="left:1016px;top:439px;width:1px;height:32px;background:#fff;"></div>
<div style="left:1020px;top:439px;width:1px;height:32px;background:#fff;"></div>
<div style="left:1036px;top:439px;width:1px;height:32px;background:#fff;"></div>
<div style="left:1042px;top:439px;width:1px;height:32px;background:#fff;"></div>
<div style="left:1047px;top:439px;width:1px;height:32px;background:#fff;"></div>
<div style="left:1049px;top:439px;width:1px;height:32px;background:#fff;"></div>
<div style="left:1057px;top:439px;width:1px;height:32px;background:#fff;"></div>
<div style="left:1061px;top:439px;width:1px;height:32px;background:#fff;"></div>
<div style="left:1063px;top:439px;width:1px;height:32px;background:#fff;"></div>
<div style="left:1069px;top:439px;width:1px;height:32px;background:#fff;"></div>
<div style="left:1078px;top:439px;width:1px;height:32px;background:#fff;"></div>
<div style="left:1086px;top:439px;width:1px;height:32px;background:#fff;"></div>
<div style="left:1094px;top:439px;width:1px;height:32px;background:#fff;"></div>
<div style="left:1104px;top:439px;width:1px;height:32px;background:#fff;"></div>
<div style="left:1110px;top:439px;width:1px;height:32px;background:#fff;"></div>
<div style="left:1119px;top:439px;width:1px;height:32px;background:#fff;"></div>
<div style="left:1142px;top:439px;width:1px;height:32px;background:#fff;"></div>
<div style="left:1148px;top:439px;width:1px;height:32px;background:#fff;"></div>
<div style="left:1160px;top:439px;width:1px;height:32px;background:#fff;"></div>
<div style="left:940px;top:439px;width:1px;height:32px;background:#fff;"></div>
<div style="left:1000px;top:439px;width:1px;height:32px;background:#fff;"></div>
<div style="left:1008px;top:439px;width:1px;height:32px;background:#fff;"></div>
<div style="left:1030px;top:439px;width:1px;height:32px;background:#fff;"></div>
<div style="left:1074px;top:439px;width:1px;height:32px;background:#fff;"></div>
<div style="left:1105px;top:439px;width:1px;height:32px;background:#fff;"></div>
<div style="left:1107px;top:439px;width:1px;height:32px;background:#fff;"></div>
<div style="left:1154px;top:439px;width:1px;height:32px;background:#fff;"></div>
<div class="fr" style="left:851.8px;top:405px;width:40px;height:32px;overflow:visible"><span style="left:-0.8px">b<i style="font-style:normal;letter-spacing:-0.9px;margin-right:0.5px">...</i>1</span></div>
<div class="fr" style="left:1170.6px;top:405px;width:50px;height:32px;overflow:visible"><span style="left:-0.8px">r<i style="font-style:normal;letter-spacing:-0.9px;margin-right:0.5px">...</i>1</span></div>
<div class="fr" style="left:851.8px;top:439px;width:40px;height:32px;overflow:visible"><span style="left:-0.8px">b<i style="font-style:normal;letter-spacing:-0.9px;margin-right:0.5px">...</i>k</span></div>
<div class="fr" style="left:1170.6px;top:439px;width:50px;height:32px;overflow:visible"><span style="left:-0.8px">u<i style="font-style:normal;letter-spacing:-0.9px;margin-right:0.5px">...</i>k</span></div>
</div>
<div style="left:0px;top:944px;width:1264px;height:2px;background:#dce5f8;"></div>
<div style="left:0px;top:946px;width:1264px;height:14px;background:#edf0f9;"></div>
</body></html>
